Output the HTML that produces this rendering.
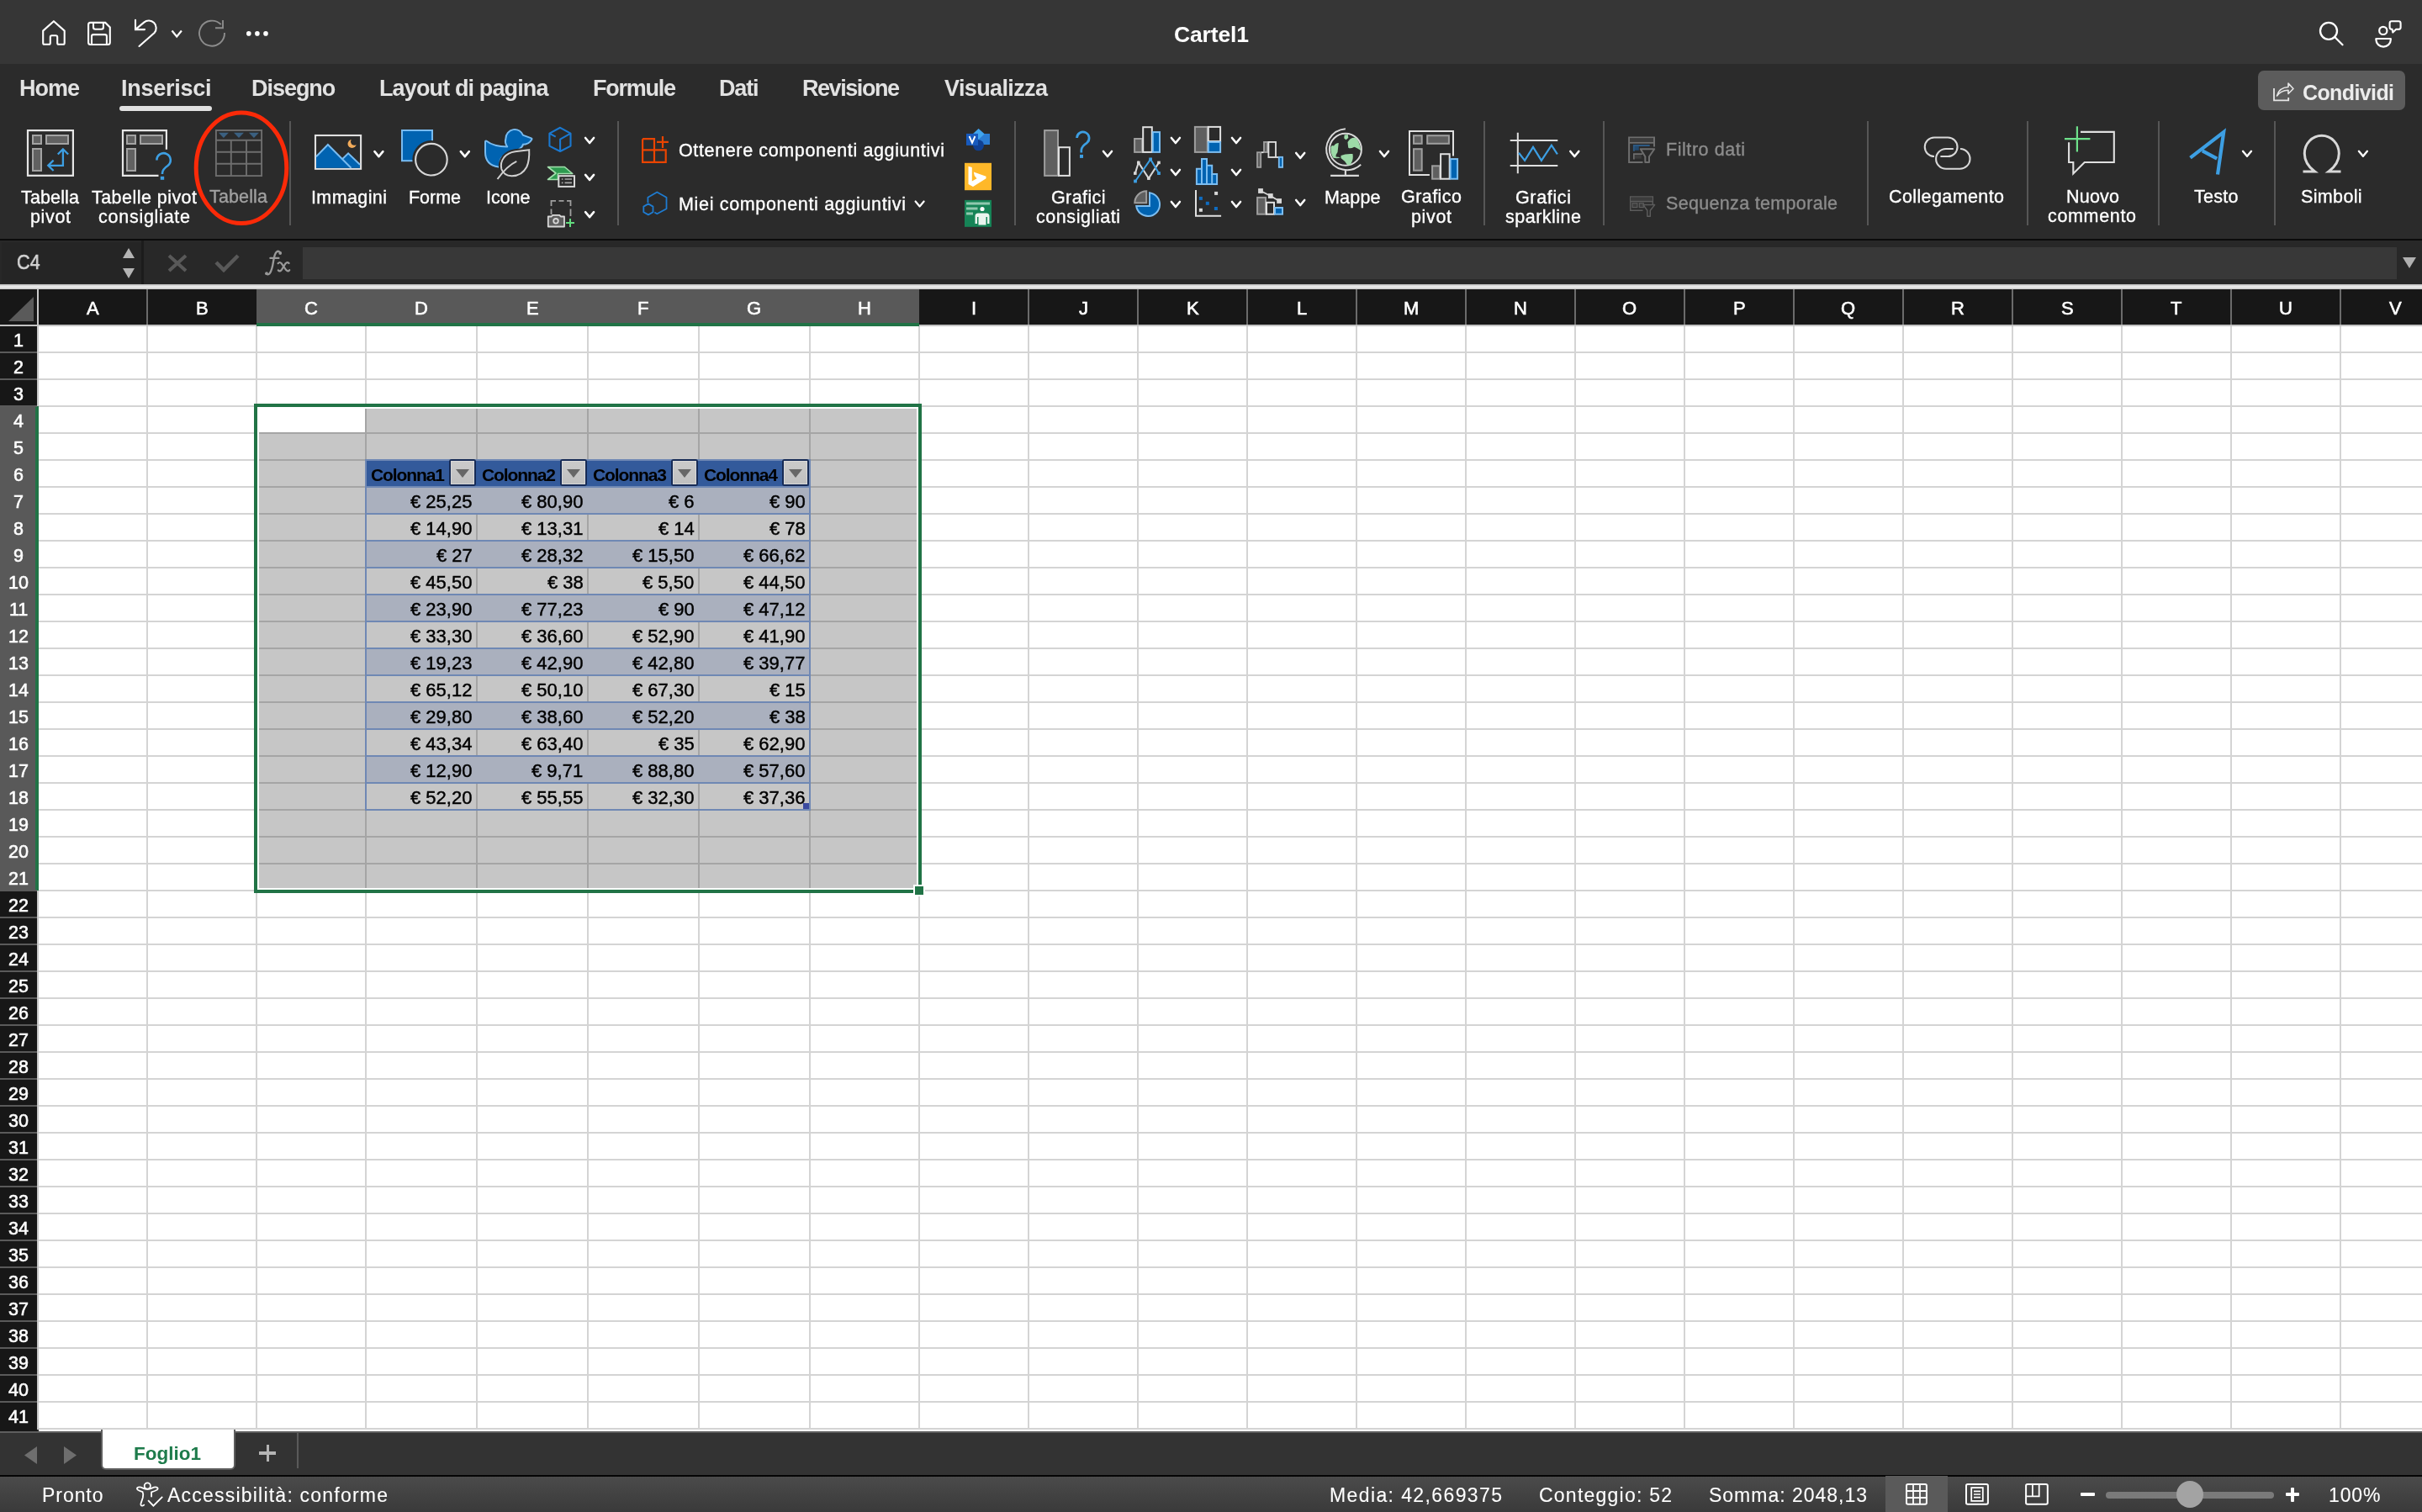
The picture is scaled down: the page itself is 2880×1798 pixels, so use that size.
<!DOCTYPE html>
<html><head><meta charset="utf-8"><style>
html,body{margin:0;padding:0;width:2880px;height:1798px;overflow:hidden;background:#2b2b2b;}
body>div,body>svg{position:absolute;}
.t{white-space:pre;line-height:1px;height:0;overflow:visible;will-change:transform}
</style></head><body>
<div style="left:0px;top:0px;width:2880px;height:76px;background:#363636;"></div>
<div style="left:0px;top:76px;width:2880px;height:208px;background:#2b2b2b;"></div>
<div style="left:0px;top:284px;width:2880px;height:2px;background:#0b0b0b;"></div>
<div style="left:0px;top:286px;width:2880px;height:52px;background:#282828;"></div>
<div style="left:2px;top:288px;width:166px;height:48px;background:#252525;"></div>
<div style="left:168px;top:286px;width:3px;height:52px;background:#1c1c1c;"></div>
<div style="left:360px;top:294px;width:2490px;height:38px;background:#383838;"></div>
<div style="left:0px;top:338px;width:2880px;height:6px;background:linear-gradient(#bababa,#f0f0f0 50%,#c6c6c6);"></div>
<div style="left:0px;top:344px;width:2880px;height:42px;background:#171717;"></div>
<div style="left:0px;top:386px;width:2880px;height:2px;background:#c2c2c2;"></div>
<div style="left:46px;top:388px;width:2834px;height:1310px;background:#ffffff;"></div>
<div style="left:0px;top:388px;width:44px;height:1312px;background:#171717;"></div>
<div style="left:44px;top:344px;width:2px;height:1356px;background:#c8c8c8;"></div>
<div style="left:305px;top:344px;width:788px;height:42px;background:#595959;"></div>
<div style="left:305px;top:384px;width:788px;height:4px;background:#217346;"></div>
<div style="left:174px;top:344px;width:2px;height:42px;background:#6b6b6b;"></div>
<div style="left:1222px;top:344px;width:2px;height:42px;background:#6b6b6b;"></div>
<div style="left:1352px;top:344px;width:2px;height:42px;background:#6b6b6b;"></div>
<div style="left:1482px;top:344px;width:2px;height:42px;background:#6b6b6b;"></div>
<div style="left:1612px;top:344px;width:2px;height:42px;background:#6b6b6b;"></div>
<div style="left:1742px;top:344px;width:2px;height:42px;background:#6b6b6b;"></div>
<div style="left:1872px;top:344px;width:2px;height:42px;background:#6b6b6b;"></div>
<div style="left:2002px;top:344px;width:2px;height:42px;background:#6b6b6b;"></div>
<div style="left:2132px;top:344px;width:2px;height:42px;background:#6b6b6b;"></div>
<div style="left:2262px;top:344px;width:2px;height:42px;background:#6b6b6b;"></div>
<div style="left:2392px;top:344px;width:2px;height:42px;background:#6b6b6b;"></div>
<div style="left:2522px;top:344px;width:2px;height:42px;background:#6b6b6b;"></div>
<div style="left:2652px;top:344px;width:2px;height:42px;background:#6b6b6b;"></div>
<div style="left:2782px;top:344px;width:2px;height:42px;background:#6b6b6b;"></div>
<div class="t" style="left:102.66px;top:366.37px;font-family:'Liberation Sans',sans-serif;font-size:22px;font-weight:400;color:#ffffff;letter-spacing:0.000px;-webkit-text-stroke:0.35px currentColor;-webkit-text-stroke:0.6px currentColor;">A</div>
<div class="t" style="left:232.66px;top:366.37px;font-family:'Liberation Sans',sans-serif;font-size:22px;font-weight:400;color:#ffffff;letter-spacing:0.000px;-webkit-text-stroke:0.35px currentColor;-webkit-text-stroke:0.6px currentColor;">B</div>
<div class="t" style="left:362.05px;top:366.37px;font-family:'Liberation Sans',sans-serif;font-size:22px;font-weight:400;color:#ffffff;letter-spacing:0.000px;-webkit-text-stroke:0.35px currentColor;-webkit-text-stroke:0.6px currentColor;">C</div>
<div class="t" style="left:493.05px;top:366.37px;font-family:'Liberation Sans',sans-serif;font-size:22px;font-weight:400;color:#ffffff;letter-spacing:0.000px;-webkit-text-stroke:0.35px currentColor;-webkit-text-stroke:0.6px currentColor;">D</div>
<div class="t" style="left:625.66px;top:366.37px;font-family:'Liberation Sans',sans-serif;font-size:22px;font-weight:400;color:#ffffff;letter-spacing:0.000px;-webkit-text-stroke:0.35px currentColor;-webkit-text-stroke:0.6px currentColor;">E</div>
<div class="t" style="left:758.27px;top:366.37px;font-family:'Liberation Sans',sans-serif;font-size:22px;font-weight:400;color:#ffffff;letter-spacing:0.000px;-webkit-text-stroke:0.35px currentColor;-webkit-text-stroke:0.6px currentColor;">F</div>
<div class="t" style="left:888.44px;top:366.37px;font-family:'Liberation Sans',sans-serif;font-size:22px;font-weight:400;color:#ffffff;letter-spacing:0.000px;-webkit-text-stroke:0.35px currentColor;-webkit-text-stroke:0.6px currentColor;">G</div>
<div class="t" style="left:1020.05px;top:366.37px;font-family:'Liberation Sans',sans-serif;font-size:22px;font-weight:400;color:#ffffff;letter-spacing:0.000px;-webkit-text-stroke:0.35px currentColor;-webkit-text-stroke:0.6px currentColor;">H</div>
<div class="t" style="left:1154.94px;top:366.37px;font-family:'Liberation Sans',sans-serif;font-size:22px;font-weight:400;color:#ffffff;letter-spacing:0.000px;-webkit-text-stroke:0.35px currentColor;-webkit-text-stroke:0.6px currentColor;">I</div>
<div class="t" style="left:1282.50px;top:366.37px;font-family:'Liberation Sans',sans-serif;font-size:22px;font-weight:400;color:#ffffff;letter-spacing:0.000px;-webkit-text-stroke:0.35px currentColor;-webkit-text-stroke:0.6px currentColor;">J</div>
<div class="t" style="left:1410.66px;top:366.37px;font-family:'Liberation Sans',sans-serif;font-size:22px;font-weight:400;color:#ffffff;letter-spacing:0.000px;-webkit-text-stroke:0.35px currentColor;-webkit-text-stroke:0.6px currentColor;">K</div>
<div class="t" style="left:1541.88px;top:366.37px;font-family:'Liberation Sans',sans-serif;font-size:22px;font-weight:400;color:#ffffff;letter-spacing:0.000px;-webkit-text-stroke:0.35px currentColor;-webkit-text-stroke:0.6px currentColor;">L</div>
<div class="t" style="left:1668.84px;top:366.37px;font-family:'Liberation Sans',sans-serif;font-size:22px;font-weight:400;color:#ffffff;letter-spacing:0.000px;-webkit-text-stroke:0.35px currentColor;-webkit-text-stroke:0.6px currentColor;">M</div>
<div class="t" style="left:1800.05px;top:366.37px;font-family:'Liberation Sans',sans-serif;font-size:22px;font-weight:400;color:#ffffff;letter-spacing:0.000px;-webkit-text-stroke:0.35px currentColor;-webkit-text-stroke:0.6px currentColor;">N</div>
<div class="t" style="left:1929.44px;top:366.37px;font-family:'Liberation Sans',sans-serif;font-size:22px;font-weight:400;color:#ffffff;letter-spacing:0.000px;-webkit-text-stroke:0.35px currentColor;-webkit-text-stroke:0.6px currentColor;">O</div>
<div class="t" style="left:2060.66px;top:366.37px;font-family:'Liberation Sans',sans-serif;font-size:22px;font-weight:400;color:#ffffff;letter-spacing:0.000px;-webkit-text-stroke:0.35px currentColor;-webkit-text-stroke:0.6px currentColor;">P</div>
<div class="t" style="left:2189.44px;top:366.37px;font-family:'Liberation Sans',sans-serif;font-size:22px;font-weight:400;color:#ffffff;letter-spacing:0.000px;-webkit-text-stroke:0.35px currentColor;-webkit-text-stroke:0.6px currentColor;">Q</div>
<div class="t" style="left:2320.05px;top:366.37px;font-family:'Liberation Sans',sans-serif;font-size:22px;font-weight:400;color:#ffffff;letter-spacing:0.000px;-webkit-text-stroke:0.35px currentColor;-webkit-text-stroke:0.6px currentColor;">R</div>
<div class="t" style="left:2450.66px;top:366.37px;font-family:'Liberation Sans',sans-serif;font-size:22px;font-weight:400;color:#ffffff;letter-spacing:0.000px;-webkit-text-stroke:0.35px currentColor;-webkit-text-stroke:0.6px currentColor;">S</div>
<div class="t" style="left:2581.27px;top:366.37px;font-family:'Liberation Sans',sans-serif;font-size:22px;font-weight:400;color:#ffffff;letter-spacing:0.000px;-webkit-text-stroke:0.35px currentColor;-webkit-text-stroke:0.6px currentColor;">T</div>
<div class="t" style="left:2710.05px;top:366.37px;font-family:'Liberation Sans',sans-serif;font-size:22px;font-weight:400;color:#ffffff;letter-spacing:0.000px;-webkit-text-stroke:0.35px currentColor;-webkit-text-stroke:0.6px currentColor;">U</div>
<div class="t" style="left:2840.66px;top:366.37px;font-family:'Liberation Sans',sans-serif;font-size:22px;font-weight:400;color:#ffffff;letter-spacing:0.000px;-webkit-text-stroke:0.35px currentColor;-webkit-text-stroke:0.6px currentColor;">V</div>
<svg style="left:0px;top:344px" width="44" height="42" viewBox="0 0 44 42"><path d="M10 38 L40 38 L40 9 Z" fill="#5a5a5a"/></svg>
<div style="left:174px;top:388px;width:2px;height:1311px;background:#d4d4d4;"></div>
<div style="left:304px;top:388px;width:2px;height:1311px;background:#d4d4d4;"></div>
<div style="left:434px;top:388px;width:2px;height:1311px;background:#d4d4d4;"></div>
<div style="left:566px;top:388px;width:2px;height:1311px;background:#d4d4d4;"></div>
<div style="left:698px;top:388px;width:2px;height:1311px;background:#d4d4d4;"></div>
<div style="left:830px;top:388px;width:2px;height:1311px;background:#d4d4d4;"></div>
<div style="left:962px;top:388px;width:2px;height:1311px;background:#d4d4d4;"></div>
<div style="left:1092px;top:388px;width:2px;height:1311px;background:#d4d4d4;"></div>
<div style="left:1222px;top:388px;width:2px;height:1311px;background:#d4d4d4;"></div>
<div style="left:1352px;top:388px;width:2px;height:1311px;background:#d4d4d4;"></div>
<div style="left:1482px;top:388px;width:2px;height:1311px;background:#d4d4d4;"></div>
<div style="left:1612px;top:388px;width:2px;height:1311px;background:#d4d4d4;"></div>
<div style="left:1742px;top:388px;width:2px;height:1311px;background:#d4d4d4;"></div>
<div style="left:1872px;top:388px;width:2px;height:1311px;background:#d4d4d4;"></div>
<div style="left:2002px;top:388px;width:2px;height:1311px;background:#d4d4d4;"></div>
<div style="left:2132px;top:388px;width:2px;height:1311px;background:#d4d4d4;"></div>
<div style="left:2262px;top:388px;width:2px;height:1311px;background:#d4d4d4;"></div>
<div style="left:2392px;top:388px;width:2px;height:1311px;background:#d4d4d4;"></div>
<div style="left:2522px;top:388px;width:2px;height:1311px;background:#d4d4d4;"></div>
<div style="left:2652px;top:388px;width:2px;height:1311px;background:#d4d4d4;"></div>
<div style="left:2782px;top:388px;width:2px;height:1311px;background:#d4d4d4;"></div>
<div style="left:46px;top:418px;width:2834px;height:2px;background:#d4d4d4;"></div>
<div style="left:46px;top:450px;width:2834px;height:2px;background:#d4d4d4;"></div>
<div style="left:46px;top:482px;width:2834px;height:2px;background:#d4d4d4;"></div>
<div style="left:46px;top:514px;width:2834px;height:2px;background:#d4d4d4;"></div>
<div style="left:46px;top:546px;width:2834px;height:2px;background:#d4d4d4;"></div>
<div style="left:46px;top:578px;width:2834px;height:2px;background:#d4d4d4;"></div>
<div style="left:46px;top:610px;width:2834px;height:2px;background:#d4d4d4;"></div>
<div style="left:46px;top:642px;width:2834px;height:2px;background:#d4d4d4;"></div>
<div style="left:46px;top:674px;width:2834px;height:2px;background:#d4d4d4;"></div>
<div style="left:46px;top:706px;width:2834px;height:2px;background:#d4d4d4;"></div>
<div style="left:46px;top:738px;width:2834px;height:2px;background:#d4d4d4;"></div>
<div style="left:46px;top:770px;width:2834px;height:2px;background:#d4d4d4;"></div>
<div style="left:46px;top:802px;width:2834px;height:2px;background:#d4d4d4;"></div>
<div style="left:46px;top:834px;width:2834px;height:2px;background:#d4d4d4;"></div>
<div style="left:46px;top:866px;width:2834px;height:2px;background:#d4d4d4;"></div>
<div style="left:46px;top:898px;width:2834px;height:2px;background:#d4d4d4;"></div>
<div style="left:46px;top:930px;width:2834px;height:2px;background:#d4d4d4;"></div>
<div style="left:46px;top:962px;width:2834px;height:2px;background:#d4d4d4;"></div>
<div style="left:46px;top:994px;width:2834px;height:2px;background:#d4d4d4;"></div>
<div style="left:46px;top:1026px;width:2834px;height:2px;background:#d4d4d4;"></div>
<div style="left:46px;top:1058px;width:2834px;height:2px;background:#d4d4d4;"></div>
<div style="left:46px;top:1090px;width:2834px;height:2px;background:#d4d4d4;"></div>
<div style="left:46px;top:1122px;width:2834px;height:2px;background:#d4d4d4;"></div>
<div style="left:46px;top:1154px;width:2834px;height:2px;background:#d4d4d4;"></div>
<div style="left:46px;top:1186px;width:2834px;height:2px;background:#d4d4d4;"></div>
<div style="left:46px;top:1218px;width:2834px;height:2px;background:#d4d4d4;"></div>
<div style="left:46px;top:1250px;width:2834px;height:2px;background:#d4d4d4;"></div>
<div style="left:46px;top:1282px;width:2834px;height:2px;background:#d4d4d4;"></div>
<div style="left:46px;top:1314px;width:2834px;height:2px;background:#d4d4d4;"></div>
<div style="left:46px;top:1346px;width:2834px;height:2px;background:#d4d4d4;"></div>
<div style="left:46px;top:1378px;width:2834px;height:2px;background:#d4d4d4;"></div>
<div style="left:46px;top:1410px;width:2834px;height:2px;background:#d4d4d4;"></div>
<div style="left:46px;top:1442px;width:2834px;height:2px;background:#d4d4d4;"></div>
<div style="left:46px;top:1474px;width:2834px;height:2px;background:#d4d4d4;"></div>
<div style="left:46px;top:1506px;width:2834px;height:2px;background:#d4d4d4;"></div>
<div style="left:46px;top:1538px;width:2834px;height:2px;background:#d4d4d4;"></div>
<div style="left:46px;top:1570px;width:2834px;height:2px;background:#d4d4d4;"></div>
<div style="left:46px;top:1602px;width:2834px;height:2px;background:#d4d4d4;"></div>
<div style="left:46px;top:1634px;width:2834px;height:2px;background:#d4d4d4;"></div>
<div style="left:46px;top:1666px;width:2834px;height:2px;background:#d4d4d4;"></div>
<div style="left:46px;top:1698px;width:2834px;height:2px;background:#d4d4d4;"></div>
<div style="left:0px;top:483px;width:42px;height:576px;background:#595959;"></div>
<div style="left:42px;top:483px;width:4px;height:576px;background:#217346;"></div>
<div style="left:0px;top:418px;width:44px;height:2px;background:#5a5a5a;"></div>
<div style="left:0px;top:450px;width:44px;height:2px;background:#5a5a5a;"></div>
<div style="left:0px;top:482px;width:44px;height:2px;background:#5a5a5a;"></div>
<div style="left:0px;top:1058px;width:44px;height:2px;background:#5a5a5a;"></div>
<div style="left:0px;top:1090px;width:44px;height:2px;background:#5a5a5a;"></div>
<div style="left:0px;top:1122px;width:44px;height:2px;background:#5a5a5a;"></div>
<div style="left:0px;top:1154px;width:44px;height:2px;background:#5a5a5a;"></div>
<div style="left:0px;top:1186px;width:44px;height:2px;background:#5a5a5a;"></div>
<div style="left:0px;top:1218px;width:44px;height:2px;background:#5a5a5a;"></div>
<div style="left:0px;top:1250px;width:44px;height:2px;background:#5a5a5a;"></div>
<div style="left:0px;top:1282px;width:44px;height:2px;background:#5a5a5a;"></div>
<div style="left:0px;top:1314px;width:44px;height:2px;background:#5a5a5a;"></div>
<div style="left:0px;top:1346px;width:44px;height:2px;background:#5a5a5a;"></div>
<div style="left:0px;top:1378px;width:44px;height:2px;background:#5a5a5a;"></div>
<div style="left:0px;top:1410px;width:44px;height:2px;background:#5a5a5a;"></div>
<div style="left:0px;top:1442px;width:44px;height:2px;background:#5a5a5a;"></div>
<div style="left:0px;top:1474px;width:44px;height:2px;background:#5a5a5a;"></div>
<div style="left:0px;top:1506px;width:44px;height:2px;background:#5a5a5a;"></div>
<div style="left:0px;top:1538px;width:44px;height:2px;background:#5a5a5a;"></div>
<div style="left:0px;top:1570px;width:44px;height:2px;background:#5a5a5a;"></div>
<div style="left:0px;top:1602px;width:44px;height:2px;background:#5a5a5a;"></div>
<div style="left:0px;top:1634px;width:44px;height:2px;background:#5a5a5a;"></div>
<div style="left:0px;top:1666px;width:44px;height:2px;background:#5a5a5a;"></div>
<div style="left:0px;top:1698px;width:44px;height:2px;background:#5a5a5a;"></div>
<div class="t" style="left:16.02px;top:404.55px;font-family:'Liberation Sans',sans-serif;font-size:21.5px;font-weight:400;color:#ffffff;letter-spacing:0.000px;-webkit-text-stroke:0.35px currentColor;-webkit-text-stroke:0.6px currentColor;">1</div>
<div class="t" style="left:16.02px;top:436.55px;font-family:'Liberation Sans',sans-serif;font-size:21.5px;font-weight:400;color:#ffffff;letter-spacing:0.000px;-webkit-text-stroke:0.35px currentColor;-webkit-text-stroke:0.6px currentColor;">2</div>
<div class="t" style="left:16.02px;top:468.55px;font-family:'Liberation Sans',sans-serif;font-size:21.5px;font-weight:400;color:#ffffff;letter-spacing:0.000px;-webkit-text-stroke:0.35px currentColor;-webkit-text-stroke:0.6px currentColor;">3</div>
<div class="t" style="left:16.02px;top:500.55px;font-family:'Liberation Sans',sans-serif;font-size:21.5px;font-weight:400;color:#ffffff;letter-spacing:0.000px;-webkit-text-stroke:0.35px currentColor;-webkit-text-stroke:0.6px currentColor;">4</div>
<div class="t" style="left:16.02px;top:532.55px;font-family:'Liberation Sans',sans-serif;font-size:21.5px;font-weight:400;color:#ffffff;letter-spacing:0.000px;-webkit-text-stroke:0.35px currentColor;-webkit-text-stroke:0.6px currentColor;">5</div>
<div class="t" style="left:16.02px;top:564.55px;font-family:'Liberation Sans',sans-serif;font-size:21.5px;font-weight:400;color:#ffffff;letter-spacing:0.000px;-webkit-text-stroke:0.35px currentColor;-webkit-text-stroke:0.6px currentColor;">6</div>
<div class="t" style="left:16.02px;top:596.55px;font-family:'Liberation Sans',sans-serif;font-size:21.5px;font-weight:400;color:#ffffff;letter-spacing:0.000px;-webkit-text-stroke:0.35px currentColor;-webkit-text-stroke:0.6px currentColor;">7</div>
<div class="t" style="left:16.02px;top:628.55px;font-family:'Liberation Sans',sans-serif;font-size:21.5px;font-weight:400;color:#ffffff;letter-spacing:0.000px;-webkit-text-stroke:0.35px currentColor;-webkit-text-stroke:0.6px currentColor;">8</div>
<div class="t" style="left:16.02px;top:660.55px;font-family:'Liberation Sans',sans-serif;font-size:21.5px;font-weight:400;color:#ffffff;letter-spacing:0.000px;-webkit-text-stroke:0.35px currentColor;-webkit-text-stroke:0.6px currentColor;">9</div>
<div class="t" style="left:10.04px;top:692.55px;font-family:'Liberation Sans',sans-serif;font-size:21.5px;font-weight:400;color:#ffffff;letter-spacing:0.000px;-webkit-text-stroke:0.35px currentColor;-webkit-text-stroke:0.6px currentColor;">10</div>
<div class="t" style="left:10.84px;top:724.55px;font-family:'Liberation Sans',sans-serif;font-size:21.5px;font-weight:400;color:#ffffff;letter-spacing:0.000px;-webkit-text-stroke:0.35px currentColor;-webkit-text-stroke:0.6px currentColor;">11</div>
<div class="t" style="left:10.04px;top:756.55px;font-family:'Liberation Sans',sans-serif;font-size:21.5px;font-weight:400;color:#ffffff;letter-spacing:0.000px;-webkit-text-stroke:0.35px currentColor;-webkit-text-stroke:0.6px currentColor;">12</div>
<div class="t" style="left:10.04px;top:788.55px;font-family:'Liberation Sans',sans-serif;font-size:21.5px;font-weight:400;color:#ffffff;letter-spacing:0.000px;-webkit-text-stroke:0.35px currentColor;-webkit-text-stroke:0.6px currentColor;">13</div>
<div class="t" style="left:10.04px;top:820.55px;font-family:'Liberation Sans',sans-serif;font-size:21.5px;font-weight:400;color:#ffffff;letter-spacing:0.000px;-webkit-text-stroke:0.35px currentColor;-webkit-text-stroke:0.6px currentColor;">14</div>
<div class="t" style="left:10.04px;top:852.55px;font-family:'Liberation Sans',sans-serif;font-size:21.5px;font-weight:400;color:#ffffff;letter-spacing:0.000px;-webkit-text-stroke:0.35px currentColor;-webkit-text-stroke:0.6px currentColor;">15</div>
<div class="t" style="left:10.04px;top:884.55px;font-family:'Liberation Sans',sans-serif;font-size:21.5px;font-weight:400;color:#ffffff;letter-spacing:0.000px;-webkit-text-stroke:0.35px currentColor;-webkit-text-stroke:0.6px currentColor;">16</div>
<div class="t" style="left:10.04px;top:916.55px;font-family:'Liberation Sans',sans-serif;font-size:21.5px;font-weight:400;color:#ffffff;letter-spacing:0.000px;-webkit-text-stroke:0.35px currentColor;-webkit-text-stroke:0.6px currentColor;">17</div>
<div class="t" style="left:10.04px;top:948.55px;font-family:'Liberation Sans',sans-serif;font-size:21.5px;font-weight:400;color:#ffffff;letter-spacing:0.000px;-webkit-text-stroke:0.35px currentColor;-webkit-text-stroke:0.6px currentColor;">18</div>
<div class="t" style="left:10.04px;top:980.55px;font-family:'Liberation Sans',sans-serif;font-size:21.5px;font-weight:400;color:#ffffff;letter-spacing:0.000px;-webkit-text-stroke:0.35px currentColor;-webkit-text-stroke:0.6px currentColor;">19</div>
<div class="t" style="left:10.04px;top:1012.55px;font-family:'Liberation Sans',sans-serif;font-size:21.5px;font-weight:400;color:#ffffff;letter-spacing:0.000px;-webkit-text-stroke:0.35px currentColor;-webkit-text-stroke:0.6px currentColor;">20</div>
<div class="t" style="left:10.04px;top:1044.55px;font-family:'Liberation Sans',sans-serif;font-size:21.5px;font-weight:400;color:#ffffff;letter-spacing:0.000px;-webkit-text-stroke:0.35px currentColor;-webkit-text-stroke:0.6px currentColor;">21</div>
<div class="t" style="left:10.04px;top:1076.55px;font-family:'Liberation Sans',sans-serif;font-size:21.5px;font-weight:400;color:#ffffff;letter-spacing:0.000px;-webkit-text-stroke:0.35px currentColor;-webkit-text-stroke:0.6px currentColor;">22</div>
<div class="t" style="left:10.04px;top:1108.55px;font-family:'Liberation Sans',sans-serif;font-size:21.5px;font-weight:400;color:#ffffff;letter-spacing:0.000px;-webkit-text-stroke:0.35px currentColor;-webkit-text-stroke:0.6px currentColor;">23</div>
<div class="t" style="left:10.04px;top:1140.55px;font-family:'Liberation Sans',sans-serif;font-size:21.5px;font-weight:400;color:#ffffff;letter-spacing:0.000px;-webkit-text-stroke:0.35px currentColor;-webkit-text-stroke:0.6px currentColor;">24</div>
<div class="t" style="left:10.04px;top:1172.55px;font-family:'Liberation Sans',sans-serif;font-size:21.5px;font-weight:400;color:#ffffff;letter-spacing:0.000px;-webkit-text-stroke:0.35px currentColor;-webkit-text-stroke:0.6px currentColor;">25</div>
<div class="t" style="left:10.04px;top:1204.55px;font-family:'Liberation Sans',sans-serif;font-size:21.5px;font-weight:400;color:#ffffff;letter-spacing:0.000px;-webkit-text-stroke:0.35px currentColor;-webkit-text-stroke:0.6px currentColor;">26</div>
<div class="t" style="left:10.04px;top:1236.55px;font-family:'Liberation Sans',sans-serif;font-size:21.5px;font-weight:400;color:#ffffff;letter-spacing:0.000px;-webkit-text-stroke:0.35px currentColor;-webkit-text-stroke:0.6px currentColor;">27</div>
<div class="t" style="left:10.04px;top:1268.55px;font-family:'Liberation Sans',sans-serif;font-size:21.5px;font-weight:400;color:#ffffff;letter-spacing:0.000px;-webkit-text-stroke:0.35px currentColor;-webkit-text-stroke:0.6px currentColor;">28</div>
<div class="t" style="left:10.04px;top:1300.55px;font-family:'Liberation Sans',sans-serif;font-size:21.5px;font-weight:400;color:#ffffff;letter-spacing:0.000px;-webkit-text-stroke:0.35px currentColor;-webkit-text-stroke:0.6px currentColor;">29</div>
<div class="t" style="left:10.04px;top:1332.55px;font-family:'Liberation Sans',sans-serif;font-size:21.5px;font-weight:400;color:#ffffff;letter-spacing:0.000px;-webkit-text-stroke:0.35px currentColor;-webkit-text-stroke:0.6px currentColor;">30</div>
<div class="t" style="left:10.04px;top:1364.55px;font-family:'Liberation Sans',sans-serif;font-size:21.5px;font-weight:400;color:#ffffff;letter-spacing:0.000px;-webkit-text-stroke:0.35px currentColor;-webkit-text-stroke:0.6px currentColor;">31</div>
<div class="t" style="left:10.04px;top:1396.55px;font-family:'Liberation Sans',sans-serif;font-size:21.5px;font-weight:400;color:#ffffff;letter-spacing:0.000px;-webkit-text-stroke:0.35px currentColor;-webkit-text-stroke:0.6px currentColor;">32</div>
<div class="t" style="left:10.04px;top:1428.55px;font-family:'Liberation Sans',sans-serif;font-size:21.5px;font-weight:400;color:#ffffff;letter-spacing:0.000px;-webkit-text-stroke:0.35px currentColor;-webkit-text-stroke:0.6px currentColor;">33</div>
<div class="t" style="left:10.04px;top:1460.55px;font-family:'Liberation Sans',sans-serif;font-size:21.5px;font-weight:400;color:#ffffff;letter-spacing:0.000px;-webkit-text-stroke:0.35px currentColor;-webkit-text-stroke:0.6px currentColor;">34</div>
<div class="t" style="left:10.04px;top:1492.55px;font-family:'Liberation Sans',sans-serif;font-size:21.5px;font-weight:400;color:#ffffff;letter-spacing:0.000px;-webkit-text-stroke:0.35px currentColor;-webkit-text-stroke:0.6px currentColor;">35</div>
<div class="t" style="left:10.04px;top:1524.55px;font-family:'Liberation Sans',sans-serif;font-size:21.5px;font-weight:400;color:#ffffff;letter-spacing:0.000px;-webkit-text-stroke:0.35px currentColor;-webkit-text-stroke:0.6px currentColor;">36</div>
<div class="t" style="left:10.04px;top:1556.55px;font-family:'Liberation Sans',sans-serif;font-size:21.5px;font-weight:400;color:#ffffff;letter-spacing:0.000px;-webkit-text-stroke:0.35px currentColor;-webkit-text-stroke:0.6px currentColor;">37</div>
<div class="t" style="left:10.04px;top:1588.55px;font-family:'Liberation Sans',sans-serif;font-size:21.5px;font-weight:400;color:#ffffff;letter-spacing:0.000px;-webkit-text-stroke:0.35px currentColor;-webkit-text-stroke:0.6px currentColor;">38</div>
<div class="t" style="left:10.04px;top:1620.55px;font-family:'Liberation Sans',sans-serif;font-size:21.5px;font-weight:400;color:#ffffff;letter-spacing:0.000px;-webkit-text-stroke:0.35px currentColor;-webkit-text-stroke:0.6px currentColor;">39</div>
<div class="t" style="left:10.04px;top:1652.55px;font-family:'Liberation Sans',sans-serif;font-size:21.5px;font-weight:400;color:#ffffff;letter-spacing:0.000px;-webkit-text-stroke:0.35px currentColor;-webkit-text-stroke:0.6px currentColor;">40</div>
<div class="t" style="left:10.04px;top:1684.55px;font-family:'Liberation Sans',sans-serif;font-size:21.5px;font-weight:400;color:#ffffff;letter-spacing:0.000px;-webkit-text-stroke:0.35px currentColor;-webkit-text-stroke:0.6px currentColor;">41</div>
<div style="left:306px;top:484px;width:786px;height:574px;background:#ffffff;"></div>
<div style="left:308px;top:486px;width:782px;height:570px;background:#c6c6c6;"></div>
<div style="left:306px;top:484px;width:128px;height:30px;background:#ffffff;"></div>
<div style="left:434px;top:486px;width:2px;height:570px;background:#a5a5a5;"></div>
<div style="left:566px;top:486px;width:2px;height:570px;background:#a5a5a5;"></div>
<div style="left:698px;top:486px;width:2px;height:570px;background:#a5a5a5;"></div>
<div style="left:830px;top:486px;width:2px;height:570px;background:#a5a5a5;"></div>
<div style="left:962px;top:486px;width:2px;height:570px;background:#a5a5a5;"></div>
<div style="left:308px;top:514px;width:782px;height:2px;background:#a5a5a5;"></div>
<div style="left:308px;top:546px;width:782px;height:2px;background:#a5a5a5;"></div>
<div style="left:308px;top:578px;width:782px;height:2px;background:#a5a5a5;"></div>
<div style="left:308px;top:610px;width:782px;height:2px;background:#a5a5a5;"></div>
<div style="left:308px;top:642px;width:782px;height:2px;background:#a5a5a5;"></div>
<div style="left:308px;top:674px;width:782px;height:2px;background:#a5a5a5;"></div>
<div style="left:308px;top:706px;width:782px;height:2px;background:#a5a5a5;"></div>
<div style="left:308px;top:738px;width:782px;height:2px;background:#a5a5a5;"></div>
<div style="left:308px;top:770px;width:782px;height:2px;background:#a5a5a5;"></div>
<div style="left:308px;top:802px;width:782px;height:2px;background:#a5a5a5;"></div>
<div style="left:308px;top:834px;width:782px;height:2px;background:#a5a5a5;"></div>
<div style="left:308px;top:866px;width:782px;height:2px;background:#a5a5a5;"></div>
<div style="left:308px;top:898px;width:782px;height:2px;background:#a5a5a5;"></div>
<div style="left:308px;top:930px;width:782px;height:2px;background:#a5a5a5;"></div>
<div style="left:308px;top:962px;width:782px;height:2px;background:#a5a5a5;"></div>
<div style="left:308px;top:994px;width:782px;height:2px;background:#a5a5a5;"></div>
<div style="left:308px;top:1026px;width:782px;height:2px;background:#a5a5a5;"></div>
<div style="left:306px;top:484px;width:128px;height:30px;background:#ffffff;"></div>
<div style="left:434px;top:546px;width:530px;height:418px;background:#c6c6c6;"></div>
<div style="left:434px;top:546px;width:530px;height:34px;background:#6f88b4;"></div>
<div style="left:436px;top:548px;width:526px;height:30px;background:#335a9b;"></div>
<div style="left:436px;top:580px;width:526px;height:30px;background:#aab0be;"></div>
<div style="left:434px;top:610px;width:530px;height:2px;background:#6f88b4;"></div>
<div style="left:434px;top:642px;width:530px;height:2px;background:#6f88b4;"></div>
<div style="left:436px;top:644px;width:526px;height:30px;background:#aab0be;"></div>
<div style="left:434px;top:674px;width:530px;height:2px;background:#6f88b4;"></div>
<div style="left:434px;top:706px;width:530px;height:2px;background:#6f88b4;"></div>
<div style="left:436px;top:708px;width:526px;height:30px;background:#aab0be;"></div>
<div style="left:434px;top:738px;width:530px;height:2px;background:#6f88b4;"></div>
<div style="left:434px;top:770px;width:530px;height:2px;background:#6f88b4;"></div>
<div style="left:436px;top:772px;width:526px;height:30px;background:#aab0be;"></div>
<div style="left:434px;top:802px;width:530px;height:2px;background:#6f88b4;"></div>
<div style="left:434px;top:834px;width:530px;height:2px;background:#6f88b4;"></div>
<div style="left:436px;top:836px;width:526px;height:30px;background:#aab0be;"></div>
<div style="left:434px;top:866px;width:530px;height:2px;background:#6f88b4;"></div>
<div style="left:434px;top:898px;width:530px;height:2px;background:#6f88b4;"></div>
<div style="left:436px;top:900px;width:526px;height:30px;background:#aab0be;"></div>
<div style="left:434px;top:930px;width:530px;height:2px;background:#6f88b4;"></div>
<div style="left:434px;top:962px;width:530px;height:2px;background:#6f88b4;"></div>
<div style="left:434px;top:546px;width:2px;height:418px;background:#6f88b4;"></div>
<div style="left:962px;top:546px;width:2px;height:418px;background:#6f88b4;"></div>
<div style="left:566px;top:612px;width:2px;height:30px;background:#a5a5a5;"></div>
<div style="left:698px;top:612px;width:2px;height:30px;background:#a5a5a5;"></div>
<div style="left:830px;top:612px;width:2px;height:30px;background:#a5a5a5;"></div>
<div style="left:566px;top:676px;width:2px;height:30px;background:#a5a5a5;"></div>
<div style="left:698px;top:676px;width:2px;height:30px;background:#a5a5a5;"></div>
<div style="left:830px;top:676px;width:2px;height:30px;background:#a5a5a5;"></div>
<div style="left:566px;top:740px;width:2px;height:30px;background:#a5a5a5;"></div>
<div style="left:698px;top:740px;width:2px;height:30px;background:#a5a5a5;"></div>
<div style="left:830px;top:740px;width:2px;height:30px;background:#a5a5a5;"></div>
<div style="left:566px;top:804px;width:2px;height:30px;background:#a5a5a5;"></div>
<div style="left:698px;top:804px;width:2px;height:30px;background:#a5a5a5;"></div>
<div style="left:830px;top:804px;width:2px;height:30px;background:#a5a5a5;"></div>
<div style="left:566px;top:868px;width:2px;height:30px;background:#a5a5a5;"></div>
<div style="left:698px;top:868px;width:2px;height:30px;background:#a5a5a5;"></div>
<div style="left:830px;top:868px;width:2px;height:30px;background:#a5a5a5;"></div>
<div style="left:566px;top:932px;width:2px;height:30px;background:#a5a5a5;"></div>
<div style="left:698px;top:932px;width:2px;height:30px;background:#a5a5a5;"></div>
<div style="left:830px;top:932px;width:2px;height:30px;background:#a5a5a5;"></div>
<div style="left:534px;top:546px;width:32px;height:32px;background:#172b55;border-radius:3px"></div>
<div style="left:536px;top:548px;width:28px;height:28px;background:linear-gradient(#cbcbcb,#bfbfbf);box-shadow:inset 0 0 0 1px #d8d8d8"></div>
<svg style="left:542px;top:558px" width="16" height="10" viewBox="0 0 16 10"><path d="M0 0H16L8 10Z" fill="#676767"/></svg>
<div class="t" style="left:441.00px;top:564.22px;font-family:'Liberation Sans',sans-serif;font-size:21px;font-weight:700;color:#000000;letter-spacing:-1.096px;">Colonna1</div>
<div style="left:666px;top:546px;width:32px;height:32px;background:#172b55;border-radius:3px"></div>
<div style="left:668px;top:548px;width:28px;height:28px;background:linear-gradient(#cbcbcb,#bfbfbf);box-shadow:inset 0 0 0 1px #d8d8d8"></div>
<svg style="left:674px;top:558px" width="16" height="10" viewBox="0 0 16 10"><path d="M0 0H16L8 10Z" fill="#676767"/></svg>
<div class="t" style="left:573.00px;top:564.22px;font-family:'Liberation Sans',sans-serif;font-size:21px;font-weight:700;color:#000000;letter-spacing:-1.096px;">Colonna2</div>
<div style="left:798px;top:546px;width:32px;height:32px;background:#172b55;border-radius:3px"></div>
<div style="left:800px;top:548px;width:28px;height:28px;background:linear-gradient(#cbcbcb,#bfbfbf);box-shadow:inset 0 0 0 1px #d8d8d8"></div>
<svg style="left:806px;top:558px" width="16" height="10" viewBox="0 0 16 10"><path d="M0 0H16L8 10Z" fill="#676767"/></svg>
<div class="t" style="left:705.00px;top:564.22px;font-family:'Liberation Sans',sans-serif;font-size:21px;font-weight:700;color:#000000;letter-spacing:-1.096px;">Colonna3</div>
<div style="left:930px;top:546px;width:32px;height:32px;background:#172b55;border-radius:3px"></div>
<div style="left:932px;top:548px;width:28px;height:28px;background:linear-gradient(#cbcbcb,#bfbfbf);box-shadow:inset 0 0 0 1px #d8d8d8"></div>
<svg style="left:938px;top:558px" width="16" height="10" viewBox="0 0 16 10"><path d="M0 0H16L8 10Z" fill="#676767"/></svg>
<div class="t" style="left:837.00px;top:564.22px;font-family:'Liberation Sans',sans-serif;font-size:21px;font-weight:700;color:#000000;letter-spacing:-1.096px;">Colonna4</div>
<div class="t" style="left:488.09px;top:596.37px;font-family:'Liberation Sans',sans-serif;font-size:22px;font-weight:400;color:#000000;letter-spacing:0.000px;-webkit-text-stroke:0.35px currentColor;-webkit-text-stroke:0.45px currentColor;">€ 25,25</div>
<div class="t" style="left:620.09px;top:596.37px;font-family:'Liberation Sans',sans-serif;font-size:22px;font-weight:400;color:#000000;letter-spacing:0.000px;-webkit-text-stroke:0.35px currentColor;-webkit-text-stroke:0.45px currentColor;">€ 80,90</div>
<div class="t" style="left:794.91px;top:596.37px;font-family:'Liberation Sans',sans-serif;font-size:22px;font-weight:400;color:#000000;letter-spacing:0.000px;-webkit-text-stroke:0.35px currentColor;-webkit-text-stroke:0.45px currentColor;">€ 6</div>
<div class="t" style="left:914.67px;top:596.37px;font-family:'Liberation Sans',sans-serif;font-size:22px;font-weight:400;color:#000000;letter-spacing:0.000px;-webkit-text-stroke:0.35px currentColor;-webkit-text-stroke:0.45px currentColor;">€ 90</div>
<div class="t" style="left:488.09px;top:628.37px;font-family:'Liberation Sans',sans-serif;font-size:22px;font-weight:400;color:#000000;letter-spacing:0.000px;-webkit-text-stroke:0.35px currentColor;-webkit-text-stroke:0.45px currentColor;">€ 14,90</div>
<div class="t" style="left:620.09px;top:628.37px;font-family:'Liberation Sans',sans-serif;font-size:22px;font-weight:400;color:#000000;letter-spacing:0.000px;-webkit-text-stroke:0.35px currentColor;-webkit-text-stroke:0.45px currentColor;">€ 13,31</div>
<div class="t" style="left:782.67px;top:628.37px;font-family:'Liberation Sans',sans-serif;font-size:22px;font-weight:400;color:#000000;letter-spacing:0.000px;-webkit-text-stroke:0.35px currentColor;-webkit-text-stroke:0.45px currentColor;">€ 14</div>
<div class="t" style="left:914.67px;top:628.37px;font-family:'Liberation Sans',sans-serif;font-size:22px;font-weight:400;color:#000000;letter-spacing:0.000px;-webkit-text-stroke:0.35px currentColor;-webkit-text-stroke:0.45px currentColor;">€ 78</div>
<div class="t" style="left:518.67px;top:660.37px;font-family:'Liberation Sans',sans-serif;font-size:22px;font-weight:400;color:#000000;letter-spacing:0.000px;-webkit-text-stroke:0.35px currentColor;-webkit-text-stroke:0.45px currentColor;">€ 27</div>
<div class="t" style="left:620.09px;top:660.37px;font-family:'Liberation Sans',sans-serif;font-size:22px;font-weight:400;color:#000000;letter-spacing:0.000px;-webkit-text-stroke:0.35px currentColor;-webkit-text-stroke:0.45px currentColor;">€ 28,32</div>
<div class="t" style="left:752.09px;top:660.37px;font-family:'Liberation Sans',sans-serif;font-size:22px;font-weight:400;color:#000000;letter-spacing:0.000px;-webkit-text-stroke:0.35px currentColor;-webkit-text-stroke:0.45px currentColor;">€ 15,50</div>
<div class="t" style="left:884.09px;top:660.37px;font-family:'Liberation Sans',sans-serif;font-size:22px;font-weight:400;color:#000000;letter-spacing:0.000px;-webkit-text-stroke:0.35px currentColor;-webkit-text-stroke:0.45px currentColor;">€ 66,62</div>
<div class="t" style="left:488.09px;top:692.37px;font-family:'Liberation Sans',sans-serif;font-size:22px;font-weight:400;color:#000000;letter-spacing:0.000px;-webkit-text-stroke:0.35px currentColor;-webkit-text-stroke:0.45px currentColor;">€ 45,50</div>
<div class="t" style="left:650.67px;top:692.37px;font-family:'Liberation Sans',sans-serif;font-size:22px;font-weight:400;color:#000000;letter-spacing:0.000px;-webkit-text-stroke:0.35px currentColor;-webkit-text-stroke:0.45px currentColor;">€ 38</div>
<div class="t" style="left:764.33px;top:692.37px;font-family:'Liberation Sans',sans-serif;font-size:22px;font-weight:400;color:#000000;letter-spacing:0.000px;-webkit-text-stroke:0.35px currentColor;-webkit-text-stroke:0.45px currentColor;">€ 5,50</div>
<div class="t" style="left:884.09px;top:692.37px;font-family:'Liberation Sans',sans-serif;font-size:22px;font-weight:400;color:#000000;letter-spacing:0.000px;-webkit-text-stroke:0.35px currentColor;-webkit-text-stroke:0.45px currentColor;">€ 44,50</div>
<div class="t" style="left:488.09px;top:724.37px;font-family:'Liberation Sans',sans-serif;font-size:22px;font-weight:400;color:#000000;letter-spacing:0.000px;-webkit-text-stroke:0.35px currentColor;-webkit-text-stroke:0.45px currentColor;">€ 23,90</div>
<div class="t" style="left:620.09px;top:724.37px;font-family:'Liberation Sans',sans-serif;font-size:22px;font-weight:400;color:#000000;letter-spacing:0.000px;-webkit-text-stroke:0.35px currentColor;-webkit-text-stroke:0.45px currentColor;">€ 77,23</div>
<div class="t" style="left:782.67px;top:724.37px;font-family:'Liberation Sans',sans-serif;font-size:22px;font-weight:400;color:#000000;letter-spacing:0.000px;-webkit-text-stroke:0.35px currentColor;-webkit-text-stroke:0.45px currentColor;">€ 90</div>
<div class="t" style="left:884.09px;top:724.37px;font-family:'Liberation Sans',sans-serif;font-size:22px;font-weight:400;color:#000000;letter-spacing:0.000px;-webkit-text-stroke:0.35px currentColor;-webkit-text-stroke:0.45px currentColor;">€ 47,12</div>
<div class="t" style="left:488.09px;top:756.37px;font-family:'Liberation Sans',sans-serif;font-size:22px;font-weight:400;color:#000000;letter-spacing:0.000px;-webkit-text-stroke:0.35px currentColor;-webkit-text-stroke:0.45px currentColor;">€ 33,30</div>
<div class="t" style="left:620.09px;top:756.37px;font-family:'Liberation Sans',sans-serif;font-size:22px;font-weight:400;color:#000000;letter-spacing:0.000px;-webkit-text-stroke:0.35px currentColor;-webkit-text-stroke:0.45px currentColor;">€ 36,60</div>
<div class="t" style="left:752.09px;top:756.37px;font-family:'Liberation Sans',sans-serif;font-size:22px;font-weight:400;color:#000000;letter-spacing:0.000px;-webkit-text-stroke:0.35px currentColor;-webkit-text-stroke:0.45px currentColor;">€ 52,90</div>
<div class="t" style="left:884.09px;top:756.37px;font-family:'Liberation Sans',sans-serif;font-size:22px;font-weight:400;color:#000000;letter-spacing:0.000px;-webkit-text-stroke:0.35px currentColor;-webkit-text-stroke:0.45px currentColor;">€ 41,90</div>
<div class="t" style="left:488.09px;top:788.37px;font-family:'Liberation Sans',sans-serif;font-size:22px;font-weight:400;color:#000000;letter-spacing:0.000px;-webkit-text-stroke:0.35px currentColor;-webkit-text-stroke:0.45px currentColor;">€ 19,23</div>
<div class="t" style="left:620.09px;top:788.37px;font-family:'Liberation Sans',sans-serif;font-size:22px;font-weight:400;color:#000000;letter-spacing:0.000px;-webkit-text-stroke:0.35px currentColor;-webkit-text-stroke:0.45px currentColor;">€ 42,90</div>
<div class="t" style="left:752.09px;top:788.37px;font-family:'Liberation Sans',sans-serif;font-size:22px;font-weight:400;color:#000000;letter-spacing:0.000px;-webkit-text-stroke:0.35px currentColor;-webkit-text-stroke:0.45px currentColor;">€ 42,80</div>
<div class="t" style="left:884.09px;top:788.37px;font-family:'Liberation Sans',sans-serif;font-size:22px;font-weight:400;color:#000000;letter-spacing:0.000px;-webkit-text-stroke:0.35px currentColor;-webkit-text-stroke:0.45px currentColor;">€ 39,77</div>
<div class="t" style="left:488.09px;top:820.37px;font-family:'Liberation Sans',sans-serif;font-size:22px;font-weight:400;color:#000000;letter-spacing:0.000px;-webkit-text-stroke:0.35px currentColor;-webkit-text-stroke:0.45px currentColor;">€ 65,12</div>
<div class="t" style="left:620.09px;top:820.37px;font-family:'Liberation Sans',sans-serif;font-size:22px;font-weight:400;color:#000000;letter-spacing:0.000px;-webkit-text-stroke:0.35px currentColor;-webkit-text-stroke:0.45px currentColor;">€ 50,10</div>
<div class="t" style="left:752.09px;top:820.37px;font-family:'Liberation Sans',sans-serif;font-size:22px;font-weight:400;color:#000000;letter-spacing:0.000px;-webkit-text-stroke:0.35px currentColor;-webkit-text-stroke:0.45px currentColor;">€ 67,30</div>
<div class="t" style="left:914.67px;top:820.37px;font-family:'Liberation Sans',sans-serif;font-size:22px;font-weight:400;color:#000000;letter-spacing:0.000px;-webkit-text-stroke:0.35px currentColor;-webkit-text-stroke:0.45px currentColor;">€ 15</div>
<div class="t" style="left:488.09px;top:852.37px;font-family:'Liberation Sans',sans-serif;font-size:22px;font-weight:400;color:#000000;letter-spacing:0.000px;-webkit-text-stroke:0.35px currentColor;-webkit-text-stroke:0.45px currentColor;">€ 29,80</div>
<div class="t" style="left:620.09px;top:852.37px;font-family:'Liberation Sans',sans-serif;font-size:22px;font-weight:400;color:#000000;letter-spacing:0.000px;-webkit-text-stroke:0.35px currentColor;-webkit-text-stroke:0.45px currentColor;">€ 38,60</div>
<div class="t" style="left:752.09px;top:852.37px;font-family:'Liberation Sans',sans-serif;font-size:22px;font-weight:400;color:#000000;letter-spacing:0.000px;-webkit-text-stroke:0.35px currentColor;-webkit-text-stroke:0.45px currentColor;">€ 52,20</div>
<div class="t" style="left:914.67px;top:852.37px;font-family:'Liberation Sans',sans-serif;font-size:22px;font-weight:400;color:#000000;letter-spacing:0.000px;-webkit-text-stroke:0.35px currentColor;-webkit-text-stroke:0.45px currentColor;">€ 38</div>
<div class="t" style="left:488.09px;top:884.37px;font-family:'Liberation Sans',sans-serif;font-size:22px;font-weight:400;color:#000000;letter-spacing:0.000px;-webkit-text-stroke:0.35px currentColor;-webkit-text-stroke:0.45px currentColor;">€ 43,34</div>
<div class="t" style="left:620.09px;top:884.37px;font-family:'Liberation Sans',sans-serif;font-size:22px;font-weight:400;color:#000000;letter-spacing:0.000px;-webkit-text-stroke:0.35px currentColor;-webkit-text-stroke:0.45px currentColor;">€ 63,40</div>
<div class="t" style="left:782.67px;top:884.37px;font-family:'Liberation Sans',sans-serif;font-size:22px;font-weight:400;color:#000000;letter-spacing:0.000px;-webkit-text-stroke:0.35px currentColor;-webkit-text-stroke:0.45px currentColor;">€ 35</div>
<div class="t" style="left:884.09px;top:884.37px;font-family:'Liberation Sans',sans-serif;font-size:22px;font-weight:400;color:#000000;letter-spacing:0.000px;-webkit-text-stroke:0.35px currentColor;-webkit-text-stroke:0.45px currentColor;">€ 62,90</div>
<div class="t" style="left:488.09px;top:916.37px;font-family:'Liberation Sans',sans-serif;font-size:22px;font-weight:400;color:#000000;letter-spacing:0.000px;-webkit-text-stroke:0.35px currentColor;-webkit-text-stroke:0.45px currentColor;">€ 12,90</div>
<div class="t" style="left:632.33px;top:916.37px;font-family:'Liberation Sans',sans-serif;font-size:22px;font-weight:400;color:#000000;letter-spacing:0.000px;-webkit-text-stroke:0.35px currentColor;-webkit-text-stroke:0.45px currentColor;">€ 9,71</div>
<div class="t" style="left:752.09px;top:916.37px;font-family:'Liberation Sans',sans-serif;font-size:22px;font-weight:400;color:#000000;letter-spacing:0.000px;-webkit-text-stroke:0.35px currentColor;-webkit-text-stroke:0.45px currentColor;">€ 88,80</div>
<div class="t" style="left:884.09px;top:916.37px;font-family:'Liberation Sans',sans-serif;font-size:22px;font-weight:400;color:#000000;letter-spacing:0.000px;-webkit-text-stroke:0.35px currentColor;-webkit-text-stroke:0.45px currentColor;">€ 57,60</div>
<div class="t" style="left:488.09px;top:948.37px;font-family:'Liberation Sans',sans-serif;font-size:22px;font-weight:400;color:#000000;letter-spacing:0.000px;-webkit-text-stroke:0.35px currentColor;-webkit-text-stroke:0.45px currentColor;">€ 52,20</div>
<div class="t" style="left:620.09px;top:948.37px;font-family:'Liberation Sans',sans-serif;font-size:22px;font-weight:400;color:#000000;letter-spacing:0.000px;-webkit-text-stroke:0.35px currentColor;-webkit-text-stroke:0.45px currentColor;">€ 55,55</div>
<div class="t" style="left:752.09px;top:948.37px;font-family:'Liberation Sans',sans-serif;font-size:22px;font-weight:400;color:#000000;letter-spacing:0.000px;-webkit-text-stroke:0.35px currentColor;-webkit-text-stroke:0.45px currentColor;">€ 32,30</div>
<div class="t" style="left:884.09px;top:948.37px;font-family:'Liberation Sans',sans-serif;font-size:22px;font-weight:400;color:#000000;letter-spacing:0.000px;-webkit-text-stroke:0.35px currentColor;-webkit-text-stroke:0.45px currentColor;">€ 37,36</div>
<div style="left:955px;top:955px;width:7px;height:7px;background:#3a4aa0;"></div>
<div style="left:302px;top:480px;width:794px;height:4px;background:#217346;"></div>
<div style="left:302px;top:480px;width:4px;height:582px;background:#217346;"></div>
<div style="left:1092px;top:480px;width:4px;height:572px;background:#217346;"></div>
<div style="left:302px;top:1058px;width:784px;height:4px;background:#217346;"></div>
<div style="left:1086px;top:1052px;width:14px;height:14px;background:#ffffff;"></div>
<div style="left:1088px;top:1054px;width:10px;height:10px;background:#217346;"></div>
<div style="left:46px;top:1698px;width:2834px;height:4px;background:#ffffff;"></div>
<div style="left:46px;top:1698px;width:2834px;height:2px;background:#d4d4d4;"></div>
<div style="left:0px;top:1698px;width:44px;height:4px;background:#171717;"></div>
<div style="left:0px;top:1702px;width:2880px;height:52px;background:#333333;"></div>
<div style="left:0px;top:1702px;width:2880px;height:2px;background:#5e5e5e;"></div>
<div style="left:0px;top:1755px;width:2880px;height:43px;background:linear-gradient(#4b4b4b,#3a3a3a);"></div>
<div style="left:0px;top:1754px;width:2880px;height:1.5px;background:#050505;"></div>
<svg style="left:29px;top:1720px" width="16" height="21" viewBox="0 0 16 21"><path d="M15 0V21L0 10.5Z" fill="#6e6e6e"/></svg>
<svg style="left:76px;top:1720px" width="15" height="21" viewBox="0 0 15 21"><path d="M0 0V21L15 10.5Z" fill="#6e6e6e"/></svg>
<div style="left:120px;top:1700px;width:160px;height:48px;background:#5e5e5e;border-radius:0 0 6px 6px"></div>
<div style="left:122px;top:1700px;width:156px;height:46px;background:#ffffff;border-radius:0 0 4px 4px"></div>
<div class="t" style="left:159.00px;top:1728.20px;font-family:'Liberation Sans',sans-serif;font-size:22.5px;font-weight:700;color:#1e7b4b;letter-spacing:0.000px;">Foglio1</div>
<div style="left:308px;top:1726px;width:20px;height:3.5px;background:#b4b4b4;"></div>
<div style="left:316.5px;top:1718px;width:3.5px;height:20px;background:#b4b4b4;"></div>
<div style="left:353px;top:1704px;width:2px;height:42px;background:#5a5a5a;"></div>
<div class="t" style="left:49.50px;top:1778.03px;font-family:'Liberation Sans',sans-serif;font-size:23px;font-weight:400;color:#ffffff;letter-spacing:0.947px;-webkit-text-stroke:0.35px currentColor;-webkit-text-stroke:0.1px currentColor;">Pronto</div>
<div class="t" style="left:199.00px;top:1778.03px;font-family:'Liberation Sans',sans-serif;font-size:23px;font-weight:400;color:#ffffff;letter-spacing:1.218px;-webkit-text-stroke:0.35px currentColor;-webkit-text-stroke:0.1px currentColor;">Accessibilità: conforme</div>
<div class="t" style="left:1581.00px;top:1777.53px;font-family:'Liberation Sans',sans-serif;font-size:23px;font-weight:400;color:#ffffff;letter-spacing:1.390px;-webkit-text-stroke:0.35px currentColor;-webkit-text-stroke:0.1px currentColor;">Media: 42,669375</div>
<div class="t" style="left:1830.00px;top:1777.53px;font-family:'Liberation Sans',sans-serif;font-size:23px;font-weight:400;color:#ffffff;letter-spacing:1.230px;-webkit-text-stroke:0.35px currentColor;-webkit-text-stroke:0.1px currentColor;">Conteggio: 52</div>
<div class="t" style="left:2031.50px;top:1777.53px;font-family:'Liberation Sans',sans-serif;font-size:23px;font-weight:400;color:#ffffff;letter-spacing:0.987px;-webkit-text-stroke:0.35px currentColor;-webkit-text-stroke:0.1px currentColor;">Somma: 2048,13</div>
<div style="left:2242px;top:1755px;width:74px;height:43px;background:#5a5a5a;"></div>
<div class="t" style="left:2768.50px;top:1777.53px;font-family:'Liberation Sans',sans-serif;font-size:23px;font-weight:400;color:#ffffff;letter-spacing:0.891px;-webkit-text-stroke:0.35px currentColor;-webkit-text-stroke:0.1px currentColor;">100%</div>
<div style="left:2474px;top:1775px;width:17px;height:4px;background:#ffffff;border-radius:1px"></div>
<div style="left:2504px;top:1773.5px;width:200px;height:8.5px;background:#7a7a7a;border-radius:4px"></div>
<div style="left:2588px;top:1761px;width:32px;height:32px;background:#a3a3a3;border-radius:50%"></div>
<div style="left:2717.5px;top:1775px;width:16.5px;height:4px;background:#ffffff;border-radius:1px"></div>
<div style="left:2723.8px;top:1768.5px;width:4px;height:17px;background:#ffffff;border-radius:1px"></div>
<div class="t" style="left:1395.50px;top:40.81px;font-family:'Liberation Sans',sans-serif;font-size:26.5px;font-weight:700;color:#ffffff;letter-spacing:-0.143px;">Cartel1</div>
<div class="t" style="left:23.00px;top:105.14px;font-family:'Liberation Sans',sans-serif;font-size:27px;font-weight:700;color:#e2e2e2;letter-spacing:-1.005px;">Home</div>
<div class="t" style="left:143.50px;top:105.14px;font-family:'Liberation Sans',sans-serif;font-size:27px;font-weight:700;color:#e2e2e2;letter-spacing:-0.260px;">Inserisci</div>
<div style="left:142px;top:126px;width:110px;height:6px;background:#e0e0e0;border-radius:3px"></div>
<div class="t" style="left:298.60px;top:105.14px;font-family:'Liberation Sans',sans-serif;font-size:27px;font-weight:700;color:#e2e2e2;letter-spacing:-1.036px;">Disegno</div>
<div class="t" style="left:451.30px;top:105.14px;font-family:'Liberation Sans',sans-serif;font-size:27px;font-weight:700;color:#e2e2e2;letter-spacing:-0.868px;">Layout di pagina</div>
<div class="t" style="left:705.30px;top:105.14px;font-family:'Liberation Sans',sans-serif;font-size:27px;font-weight:700;color:#e2e2e2;letter-spacing:-1.236px;">Formule</div>
<div class="t" style="left:855.10px;top:105.14px;font-family:'Liberation Sans',sans-serif;font-size:27px;font-weight:700;color:#e2e2e2;letter-spacing:-1.172px;">Dati</div>
<div class="t" style="left:953.80px;top:105.14px;font-family:'Liberation Sans',sans-serif;font-size:27px;font-weight:700;color:#e2e2e2;letter-spacing:-1.445px;">Revisione</div>
<div class="t" style="left:1123.00px;top:105.14px;font-family:'Liberation Sans',sans-serif;font-size:27px;font-weight:700;color:#e2e2e2;letter-spacing:-0.620px;">Visualizza</div>
<div style="left:2685px;top:84px;width:175px;height:47px;background:#5c5c5c;border-radius:7px"></div>
<div class="t" style="left:2737.70px;top:109.83px;font-family:'Liberation Sans',sans-serif;font-size:25px;font-weight:700;color:#ececec;letter-spacing:-0.611px;">Condividi</div>
<div class="t" style="left:19.60px;top:310.51px;font-family:'Liberation Sans',sans-serif;font-size:24.5px;font-weight:400;color:#d6d6d6;letter-spacing:0.000px;-webkit-text-stroke:0.35px currentColor;transform:scaleX(0.88);transform-origin:0 0;-webkit-text-stroke:0.6px currentColor;">C4</div>
<svg style="left:145px;top:294px" width="16" height="38" viewBox="0 0 16 38"><path d="M8 1L15 13H1Z M1 25H15L8 37Z" fill="#b4b4b4"/></svg>
<svg style="left:198px;top:301px" width="26" height="24" viewBox="0 0 26 24"><path d="M3 3L23 21M23 3L3 21" stroke="#595959" stroke-width="4"/></svg>
<svg style="left:254px;top:301px" width="32" height="24" viewBox="0 0 32 24"><path d="M3 11L12 20L29 3" stroke="#595959" stroke-width="4.5" fill="none"/></svg>
<svg style="left:0;top:286px" width="400" height="52" viewBox="0 286 400 52"><path d="M333.3 300.3 Q331.5 297.6 328.8 299.6 Q326.6 301.6 325.2 310 Q323.4 322 320.6 325.2 Q318.6 327.4 316.8 325.4 M321.4 306.9 H331.4" fill="none" stroke="#9a9a9a" stroke-width="2.3" stroke-linecap="round"/><circle cx="333.2" cy="301" r="1.9" fill="#9a9a9a"/><circle cx="317" cy="325.2" r="1.9" fill="#9a9a9a"/><path d="M330.6 313.2 Q332.6 310.8 334.6 313.2 L340 320.8 Q342.2 323.6 344.2 321.2 M343.6 313 Q341.6 311 339.6 313.2 L335 320.6 Q333 323.6 330.8 321.4" fill="none" stroke="#9a9a9a" stroke-width="2.2" stroke-linecap="round"/></svg>
<svg style="left:2857px;top:306px" width="16" height="13" viewBox="0 0 16 13"><path d="M0 0H16L8 13Z" fill="#b0b0b0"/></svg>
<svg style="left:0;top:0" width="2880" height="76" viewBox="0 0 2880 76"><path d="M51.2 36.6 L63.9 25.2 L76.7 36.6 V51.3 Q76.7 52.8 75.2 52.8 H69.7 Q68.2 52.8 68.2 51.3 V44 Q68.2 42.2 66.4 42.2 H61.6 Q59.8 42.2 59.8 44 V51.3 Q59.8 52.8 58.3 52.8 H52.7 Q51.2 52.8 51.2 51.3 Z" fill="none" stroke="#fff" stroke-width="2.1" stroke-linejoin="round"/><path d="M107.5 26.9 H125.2 L130.8 32.4 V50.5 Q130.8 53 128.3 53 H107.5 Q105.1 53 105.1 50.5 V29.4 Q105.1 26.9 107.5 26.9 Z" fill="none" stroke="#fff" stroke-width="2.1"/><path d="M111 26.9 V32.6 Q111 34.8 113.2 34.8 H120.7 Q122.9 34.8 122.9 32.6 V26.9 M109 53 V43.3 Q109 41.1 111.2 41.1 H124.7 Q126.9 41.1 126.9 43.3 V53" fill="none" stroke="#fff" stroke-width="2.1"/><path d="M161 23.9 V35.1 H172 M161 35.1 L171.2 26.6 A8.8 8.8 0 0 1 183.6 39 L165.5 55" fill="none" stroke="#fff" stroke-width="2.1" stroke-linecap="round" stroke-linejoin="miter"/><path d="M204.5 36.5 L210.2 43.5 L215.9 36.5" fill="none" stroke="#fff" stroke-width="2.2"/><path d="M267 39 A15 15 0 1 1 262.8 29.2" fill="none" stroke="#8c8c8c" stroke-width="1.9"/><path d="M265 24 V33.3 H256" fill="none" stroke="#8c8c8c" stroke-width="1.9"/><circle cx="295.8" cy="39.9" r="2.8" fill="#fff"/><circle cx="305.9" cy="39.9" r="2.8" fill="#fff"/><circle cx="316" cy="39.9" r="2.8" fill="#fff"/><circle cx="2769" cy="36.8" r="10" fill="none" stroke="#fff" stroke-width="2.3"/><path d="M2776.5 44.3 L2785.5 53.3" stroke="#fff" stroke-width="2.3" stroke-linecap="round"/><circle cx="2833.8" cy="36.4" r="4.6" fill="none" stroke="#fff" stroke-width="2.2"/><path d="M2825.4 46 H2842.8 V47.3 A8.7 8.3 0 0 1 2825.4 47.3 Z" fill="none" stroke="#fff" stroke-width="2.2" stroke-linejoin="round"/><path d="M2844 25.3 H2852.2 Q2854.6 25.3 2854.6 27.7 V32.5 Q2854.6 34.9 2852.2 34.9 H2849 L2845.3 38.6 L2844.6 34.9 Q2841.6 34.9 2841.6 32.5 V27.7 Q2841.6 25.3 2844 25.3 Z" fill="none" stroke="#fff" stroke-width="2.1" stroke-linejoin="round"/></svg>
<div class="t" style="left:25.00px;top:234.55px;font-family:'Liberation Sans',sans-serif;font-size:21.5px;font-weight:400;color:#ffffff;letter-spacing:0.143px;-webkit-text-stroke:0.35px currentColor;">Tabella</div>
<div class="t" style="left:35.50px;top:257.55px;font-family:'Liberation Sans',sans-serif;font-size:21.5px;font-weight:400;color:#ffffff;letter-spacing:0.645px;-webkit-text-stroke:0.35px currentColor;">pivot</div>
<div class="t" style="left:108.50px;top:234.55px;font-family:'Liberation Sans',sans-serif;font-size:21.5px;font-weight:400;color:#ffffff;letter-spacing:0.456px;-webkit-text-stroke:0.35px currentColor;">Tabelle pivot</div>
<div class="t" style="left:116.50px;top:257.55px;font-family:'Liberation Sans',sans-serif;font-size:21.5px;font-weight:400;color:#ffffff;letter-spacing:0.741px;-webkit-text-stroke:0.35px currentColor;">consigliate</div>
<div class="t" style="left:248.80px;top:234.15px;font-family:'Liberation Sans',sans-serif;font-size:21.5px;font-weight:400;color:#a0a0a0;letter-spacing:0.143px;-webkit-text-stroke:0.35px currentColor;">Tabella</div>
<div class="t" style="left:370.00px;top:234.55px;font-family:'Liberation Sans',sans-serif;font-size:21.5px;font-weight:400;color:#ffffff;letter-spacing:0.397px;-webkit-text-stroke:0.35px currentColor;">Immagini</div>
<div class="t" style="left:486.00px;top:234.55px;font-family:'Liberation Sans',sans-serif;font-size:21.5px;font-weight:400;color:#ffffff;letter-spacing:-0.031px;-webkit-text-stroke:0.35px currentColor;">Forme</div>
<div class="t" style="left:578.00px;top:234.55px;font-family:'Liberation Sans',sans-serif;font-size:21.5px;font-weight:400;color:#ffffff;letter-spacing:-0.027px;-webkit-text-stroke:0.35px currentColor;">Icone</div>
<div class="t" style="left:807.00px;top:179.15px;font-family:'Liberation Sans',sans-serif;font-size:21.5px;font-weight:400;color:#ffffff;letter-spacing:0.634px;-webkit-text-stroke:0.35px currentColor;">Ottenere componenti aggiuntivi</div>
<div class="t" style="left:807.00px;top:242.55px;font-family:'Liberation Sans',sans-serif;font-size:21.5px;font-weight:400;color:#ffffff;letter-spacing:0.665px;-webkit-text-stroke:0.35px currentColor;">Miei componenti aggiuntivi</div>
<div class="t" style="left:1249.50px;top:234.55px;font-family:'Liberation Sans',sans-serif;font-size:21.5px;font-weight:400;color:#ffffff;letter-spacing:0.396px;-webkit-text-stroke:0.35px currentColor;">Grafici</div>
<div class="t" style="left:1231.60px;top:257.55px;font-family:'Liberation Sans',sans-serif;font-size:21.5px;font-weight:400;color:#ffffff;letter-spacing:0.558px;-webkit-text-stroke:0.35px currentColor;">consigliati</div>
<div class="t" style="left:1574.50px;top:234.55px;font-family:'Liberation Sans',sans-serif;font-size:21.5px;font-weight:400;color:#ffffff;letter-spacing:0.188px;-webkit-text-stroke:0.35px currentColor;">Mappe</div>
<div class="t" style="left:1666.00px;top:234.15px;font-family:'Liberation Sans',sans-serif;font-size:21.5px;font-weight:400;color:#ffffff;letter-spacing:0.448px;-webkit-text-stroke:0.35px currentColor;">Grafico</div>
<div class="t" style="left:1678.00px;top:257.55px;font-family:'Liberation Sans',sans-serif;font-size:21.5px;font-weight:400;color:#ffffff;letter-spacing:0.645px;-webkit-text-stroke:0.35px currentColor;">pivot</div>
<div class="t" style="left:1802.00px;top:234.55px;font-family:'Liberation Sans',sans-serif;font-size:21.5px;font-weight:400;color:#ffffff;letter-spacing:0.646px;-webkit-text-stroke:0.35px currentColor;">Grafici</div>
<div class="t" style="left:1790.00px;top:257.55px;font-family:'Liberation Sans',sans-serif;font-size:21.5px;font-weight:400;color:#ffffff;letter-spacing:0.494px;-webkit-text-stroke:0.35px currentColor;">sparkline</div>
<div class="t" style="left:1980.70px;top:178.35px;font-family:'Liberation Sans',sans-serif;font-size:21.5px;font-weight:400;color:#8c8c8c;letter-spacing:0.558px;-webkit-text-stroke:0.35px currentColor;">Filtro dati</div>
<div class="t" style="left:1981.00px;top:242.05px;font-family:'Liberation Sans',sans-serif;font-size:21.5px;font-weight:400;color:#8c8c8c;letter-spacing:0.328px;-webkit-text-stroke:0.35px currentColor;">Sequenza temporale</div>
<div class="t" style="left:2246.00px;top:234.25px;font-family:'Liberation Sans',sans-serif;font-size:21.5px;font-weight:400;color:#ffffff;letter-spacing:0.393px;-webkit-text-stroke:0.35px currentColor;">Collegamento</div>
<div class="t" style="left:2456.50px;top:234.25px;font-family:'Liberation Sans',sans-serif;font-size:21.5px;font-weight:400;color:#ffffff;letter-spacing:0.211px;-webkit-text-stroke:0.35px currentColor;">Nuovo</div>
<div class="t" style="left:2435.00px;top:257.35px;font-family:'Liberation Sans',sans-serif;font-size:21.5px;font-weight:400;color:#ffffff;letter-spacing:0.661px;-webkit-text-stroke:0.35px currentColor;">commento</div>
<div class="t" style="left:2609.00px;top:234.25px;font-family:'Liberation Sans',sans-serif;font-size:21.5px;font-weight:400;color:#ffffff;letter-spacing:0.252px;-webkit-text-stroke:0.35px currentColor;">Testo</div>
<div class="t" style="left:2736.00px;top:234.25px;font-family:'Liberation Sans',sans-serif;font-size:21.5px;font-weight:400;color:#ffffff;letter-spacing:0.350px;-webkit-text-stroke:0.35px currentColor;">Simboli</div>
<svg style="left:0;top:1700px" width="2880" height="98" viewBox="0 1700 2880 98"><circle cx="175.3" cy="1767" r="3.6" fill="none" stroke="#fff" stroke-width="1.8"/><path d="M169.6 1774.2 Q165 1772.6 163.8 1771.6 Q161.8 1769.6 164.4 1768.6 Q166.6 1768 170 1769.6 Q175.3 1772 180.6 1769.6 Q184 1768 186.2 1768.6 Q188.8 1769.6 186.8 1771.6 Q185.2 1772.8 180.1 1774.3 V1779.6 M169.6 1774.2 Q170.8 1776.5 169.8 1781 L167.6 1787.6 Q166.8 1790.6 169.2 1790.6 Q170.6 1790.6 171.3 1789.6" fill="none" stroke="#fff" stroke-width="1.8" stroke-linecap="round" stroke-linejoin="round"/><path d="M176.1 1784.1 L182.4 1790.6 L193.2 1779.9" fill="none" stroke="#fff" stroke-width="1.9"/><rect x="2267" y="1765" width="23.9" height="23.8" rx="1.8" fill="none" stroke="#fff" stroke-width="2"/><path d="M2275 1765 V1788.8 M2283 1765 V1788.8 M2267 1773 H2290.9 M2267 1781 H2290.9" stroke="#fff" stroke-width="1.8"/><rect x="2338" y="1765" width="25.9" height="23.8" rx="1.8" fill="none" stroke="#fff" stroke-width="2"/><rect x="2344.2" y="1769.1" width="13.6" height="15.8" fill="none" stroke="#fff" stroke-width="1.8"/><path d="M2347 1773.3 H2355 M2347 1777 H2355 M2347 1780.7 H2355" stroke="#fff" stroke-width="1.7"/><rect x="2409.1" y="1765" width="25.7" height="23.8" rx="1.8" fill="none" stroke="#fff" stroke-width="2"/><path d="M2416.9 1765 V1779.4 M2424.7 1765 V1779.4 M2409.1 1779.4 H2425.6" stroke="#fff" stroke-width="1.8"/></svg>
<svg style="left:0;top:76px" width="2880" height="210" viewBox="0 76 2880 210"><rect x="344" y="144" width="2" height="124" fill="#565656"/><rect x="734" y="144" width="2" height="124" fill="#565656"/><rect x="1206" y="144" width="2" height="124" fill="#565656"/><rect x="1764" y="144" width="2" height="124" fill="#565656"/><rect x="1906" y="144" width="2" height="124" fill="#565656"/><rect x="2220" y="144" width="2" height="124" fill="#565656"/><rect x="2410" y="144" width="2" height="124" fill="#565656"/><rect x="2566" y="144" width="2" height="124" fill="#565656"/><rect x="2704" y="144" width="2" height="124" fill="#565656"/><rect x="33" y="155.1" width="53.9" height="53.7" fill="none" stroke="#e6e6e6" stroke-width="2.2"/><rect x="39" y="161" width="10" height="10" fill="#616161" stroke="#a3a3a3" stroke-width="2"/><rect x="55" y="161" width="26" height="10" fill="#616161" stroke="#a3a3a3" stroke-width="2"/><rect x="39" y="177" width="10" height="26" fill="#616161" stroke="#a3a3a3" stroke-width="2"/><path d="M74.9 177.5 V196.8 H57.5 M68.8 183.5 L74.9 177.3 L81.1 183.5 M63.6 190.7 L57.3 196.8 L63.6 203" fill="none" stroke="#3d9fe3" stroke-width="2.3"/><path d="M197.9 177.7 V155.1 H146 V208.8 H188.5" fill="none" stroke="#e6e6e6" stroke-width="2.2"/><rect x="151" y="161" width="10" height="10" fill="#616161" stroke="#a3a3a3" stroke-width="2"/><rect x="167" y="161" width="26" height="10" fill="#616161" stroke="#a3a3a3" stroke-width="2"/><rect x="151" y="177" width="10" height="26" fill="#616161" stroke="#a3a3a3" stroke-width="2"/><path d="M186.4 190.5 A8.2 8.2 0 1 1 199.5 197 Q193 201.5 193 206 V207" fill="none" stroke="#3d9fe3" stroke-width="2.6"/><rect x="190.8" y="209.8" width="4.4" height="4" fill="#3d9fe3"/><rect x="256.9" y="155" width="54.2" height="54.1" fill="none" stroke="#6e6e6e" stroke-width="1.9"/><path d="M256.9 166.7 H311.1 M256.9 180.8 H311.1 M256.9 194.7 H311.1 M274.8 166.7 V209.1 M293 166.7 V209.1" fill="none" stroke="#6e6e6e" stroke-width="1.9"/><path d="M259.9 157.8 H271.9 L265.9 164 Z" fill="#3b6080"/><path d="M278 157.8 H290 L284 164 Z" fill="#3b6080"/><path d="M295.9 157.8 H307.9 L301.9 164 Z" fill="#3b6080"/><rect x="375" y="161" width="54.1" height="39.8" fill="none" stroke="#e0e0e0" stroke-width="2.1"/><path d="M376 186.3 L389.9 172 L407.3 189 L414.1 182.3 L428 195.8 V199.8 H376 Z" fill="#0063b1"/><path d="M376 186.3 L389.9 172 L417.5 199.8 M407.3 189 L414.1 182.3 L428 195.8" fill="none" stroke="#78bbf0" stroke-width="2"/><circle cx="418.6" cy="171" r="5.1" fill="#f3ab5a"/><circle cx="421.4" cy="168.3" r="4.4" fill="#2b2b2b"/><path d="M445.4 180.2 L450.4 186.2 L455.4 180.2" fill="none" stroke="#ffffff" stroke-width="2.6" stroke-linecap="round" stroke-linejoin="round"/><rect x="478" y="155" width="36" height="36.2" fill="#0063b1" stroke="#78bbf0" stroke-width="2"/><circle cx="512.9" cy="189.7" r="22.6" fill="#2b2b2b"/><circle cx="512.9" cy="189.7" r="18.8" fill="none" stroke="#d8d8d8" stroke-width="2.1"/><path d="M547.8 180.2 L552.8 186.2 L557.8 180.2" fill="none" stroke="#ffffff" stroke-width="2.6" stroke-linecap="round" stroke-linejoin="round"/><path d="M578 168.5 Q586 175 603.5 175.5 L606 172 L620 172 Q617.5 177.2 611 178.8 Q599 181 594 189.5 L593 197.5 Q578 195.5 578 181 Z" fill="#78bbf0" stroke="#78bbf0" stroke-width="4" stroke-linejoin="round"/><path d="M602.4 164.8 A9.7 9.7 0 0 1 621.3 161.6 L631.5 165.3 Q628.5 170.8 621.4 170.8 A9.7 9.7 0 0 1 602.4 164.8 Z" fill="#78bbf0" stroke="#78bbf0" stroke-width="4" stroke-linejoin="round"/><path d="M578 168.5 Q586 175 603.5 175.5 L606 172 L620 172 Q617.5 177.2 611 178.8 Q599 181 594 189.5 L593 197.5 Q578 195.5 578 181 Z" fill="#0063b1"/><path d="M602.4 164.8 A9.7 9.7 0 0 1 621.3 161.6 L631.5 165.3 Q628.5 170.8 621.4 170.8 A9.7 9.7 0 0 1 602.4 164.8 Z" fill="#0063b1"/><path d="M629.2 178.2 Q620.5 179.2 612.5 180.2 Q604 181.5 599.5 187 Q594.5 193.5 596.3 201 Q599 208.8 608.3 209.2 Q620.5 209.4 626.3 198.5 Q629.8 190.5 629.2 178.2 Z" fill="#2b2b2b" stroke="#2b2b2b" stroke-width="6"/><path d="M629.2 178.2 Q620.5 179.2 612.5 180.2 Q604 181.5 599.5 187 Q594.5 193.5 596.3 201 Q599 208.8 608.3 209.2 Q620.5 209.4 626.3 198.5 Q629.8 190.5 629.2 178.2 Z" fill="#2b2b2b" stroke="#d0d0d0" stroke-width="2"/><path d="M614.3 191.8 Q603 197 591.5 213" fill="none" stroke="#d0d0d0" stroke-width="2"/><path d="M666.1 151.8 L678.5 158.6 V173.6 L666.1 180 L653.4 173.6 V158.6 Z M666.1 180 V165.6 L678.5 158.6 M653.4 158.6 L660.7 162.6" fill="none" stroke="#1a78d0" stroke-width="2.1" stroke-linejoin="round"/><path d="M696.1 164 L701.1 170 L706.1 164" fill="none" stroke="#ffffff" stroke-width="2.6" stroke-linecap="round" stroke-linejoin="round"/><path d="M651.5 198.5 H671.4 L680.8 206.5 H663.5 V213.5 H651.5 L661 206 Z" fill="#2e9a50" stroke="#a2e1ad" stroke-width="1.6" stroke-linejoin="round"/><rect x="664.3" y="209.2" width="18.7" height="12.7" fill="#2b2b2b" stroke="#d8d8d8" stroke-width="2"/><path d="M667.8 213 H669.5 M671.5 213 H680 M667.8 217.3 H669.5 M671.5 217.3 H680" stroke="#a8a8a8" stroke-width="1.7"/><path d="M696.1 207.9 L701.1 213.9 L706.1 207.9" fill="none" stroke="#ffffff" stroke-width="2.6" stroke-linecap="round" stroke-linejoin="round"/><path d="M655.5 245 V238.8 H661 M664.5 238.8 H670.5 M674 238.8 H678.5 V245 M655.5 248.5 V255 M678.5 248.5 V257" fill="none" stroke="#a0a0a0" stroke-width="1.8"/><path d="M651.8 257.5 H655.5 L657.5 255.8 H665 L667 257.5 H671 V269.5 H651.8 Z" fill="#5e5e5e" stroke="#d8d8d8" stroke-width="1.8" stroke-linejoin="round"/><circle cx="661" cy="262.8" r="2.8" fill="none" stroke="#d8d8d8" stroke-width="1.8"/><path d="M673 265 H683 M678 260 V270" stroke="#62db7e" stroke-width="2"/><path d="M696.1 252.2 L701.1 258.2 L706.1 252.2" fill="none" stroke="#ffffff" stroke-width="2.6" stroke-linecap="round" stroke-linejoin="round"/><path d="M764.1 165.2 H778 V192.8 M764.1 178.3 H791.7 V192.8 H764.1 Z M764.1 165.2 V192.8" fill="none" stroke="#ea4400" stroke-width="2.2"/><path d="M781 168.8 H794.9 M788 161.9 V176.1" stroke="#ea4400" stroke-width="2.2"/><path d="M770.4 240.9 V234.7 L781.3 228.5 L792.5 234.7 V248.2 L781.3 254.3 L778.3 252.4" fill="none" stroke="#1e7bd0" stroke-width="1.8" stroke-linejoin="round"/><path d="M770.9 242.4 L776.5 245.6 V252.2 L770.9 255.4 L765.3 252.2 V245.6 Z" fill="none" stroke="#1e7bd0" stroke-width="1.8" stroke-linejoin="round"/><path d="M1088.6 239.5 L1093.6 245.5 L1098.6 239.5" fill="none" stroke="#ffffff" stroke-width="2.2" stroke-linecap="round" stroke-linejoin="round"/><path d="M1163.5 153 L1170.5 159 H1177 V172 H1163.5 Z" fill="#2b7cd3"/><path d="M1163.5 153 L1170.5 159.5 L1163.5 166 L1156.5 159.5 Z" fill="#41a5ee"/><circle cx="1163.5" cy="172.8" r="6.5" fill="#103f91"/><rect x="1149" y="158.9" width="14" height="14" fill="#185abd"/><path d="M1152.6 162 L1156 169.8 L1159.4 162" fill="none" stroke="#fff" stroke-width="1.9"/><rect x="1147" y="193.8" width="32" height="32.4" fill="#ffb829"/><path d="M1151.5 197.8 L1155.8 199 V215.5 L1161.5 212.2 L1158.8 209 L1157.8 204.5 L1172.5 209.8 V212.3 L1157 222 L1151.5 219 Z" fill="#ffffff"/><rect x="1147" y="237.9" width="32" height="31.9" fill="#168457"/><path d="M1149 240.5 H1177 V243.5 H1149 Z M1149 246.5 H1162.5 V249.5 H1149 Z M1149 252.5 H1157 V255.5 H1149 Z" fill="#8fc8ae"/><circle cx="1168" cy="248.5" r="2.6" fill="#ffffff"/><path d="M1159.5 266 V257 Q1159.5 253.5 1163 253.5 H1173 Q1176.5 253.5 1176.5 257 V266 H1174 V258 H1172.5 V267.5 H1163.5 V258 H1162 V266 Z" fill="#e9f4ee"/><rect x="1242.1" y="155.1" width="15.900000000000091" height="53.80000000000001" fill="#5f5f5f" stroke="#9e9e9e" stroke-width="2"/><rect x="1259.0" y="175.2" width="12.900000000000091" height="33.70000000000002" fill="none" stroke="#e0e0e0" stroke-width="2"/><path d="M1280.5 164 A7.3 7.3 0 1 1 1292.5 169.8 Q1286 174 1285.8 178.5 V181.5" fill="none" stroke="#3d9fe3" stroke-width="2.7"/><rect x="1284" y="183.9" width="4" height="4" fill="#3d9fe3"/><path d="M1312 180 L1317.0 186 L1322 180" fill="none" stroke="#ffffff" stroke-width="2.6" stroke-linecap="round" stroke-linejoin="round"/><rect x="1349.1" y="165.0" width="9.100000000000136" height="15.900000000000006" fill="#5f5f5f" stroke="#9e9e9e" stroke-width="2"/><rect x="1359.2" y="151.2" width="10.599999999999909" height="29.700000000000017" fill="none" stroke="#e0e0e0" stroke-width="2"/><rect x="1370.8" y="157.1" width="8.200000000000045" height="23.80000000000001" fill="#0063b1" stroke="#7cbdf0" stroke-width="2"/><path d="M1392.9 164 L1397.9 170 L1402.9 164" fill="none" stroke="#ffffff" stroke-width="2.6" stroke-linecap="round" stroke-linejoin="round"/><path d="M1349.8 206.1 L1353.8 193.4 L1365.9 212.1 L1378 193.4" fill="none" stroke="#d8d8d8" stroke-width="2"/><rect x="1348.0" y="204.29999999999998" width="3.6" height="3.6" fill="#d8d8d8"/><rect x="1352.0" y="191.6" width="3.6" height="3.6" fill="#d8d8d8"/><rect x="1364.1000000000001" y="210.29999999999998" width="3.6" height="3.6" fill="#d8d8d8"/><rect x="1376.2" y="191.6" width="3.6" height="3.6" fill="#d8d8d8"/><path d="M1350 215.5 L1368.1 189.4 L1378 206.1" fill="none" stroke="#3d9fe3" stroke-width="2"/><rect x="1348.1" y="213.6" width="3.8" height="3.8" fill="#3d9fe3"/><rect x="1366.1999999999998" y="187.5" width="3.8" height="3.8" fill="#3d9fe3"/><rect x="1376.1" y="204.2" width="3.8" height="3.8" fill="#3d9fe3"/><path d="M1392.9 202 L1397.9 208 L1402.9 202" fill="none" stroke="#ffffff" stroke-width="2.6" stroke-linecap="round" stroke-linejoin="round"/><path d="M1363.2 227.3 A14 14 0 0 0 1349.3 241.3 H1363.2 Z" fill="#5f5f5f" stroke="#9e9e9e" stroke-width="2"/><path d="M1367 229.2 A14 14 0 1 1 1351.2 245 H1367 Z" fill="#0063b1" stroke="#7cbdf0" stroke-width="2"/><path d="M1392.9 240 L1397.9 246 L1402.9 240" fill="none" stroke="#ffffff" stroke-width="2.6" stroke-linecap="round" stroke-linejoin="round"/><rect x="1420.9" y="150.9" width="14.899999999999864" height="30.0" fill="#5f5f5f" stroke="#9e9e9e" stroke-width="2"/><rect x="1436.8" y="150.9" width="14.299999999999955" height="17.099999999999994" fill="none" stroke="#e0e0e0" stroke-width="2"/><rect x="1436.8" y="169.0" width="14.299999999999955" height="11.900000000000006" fill="#0063b1" stroke="#7cbdf0" stroke-width="2"/><path d="M1465 164 L1470.0 170 L1475 164" fill="none" stroke="#ffffff" stroke-width="2.6" stroke-linecap="round" stroke-linejoin="round"/><path d="M1422.9 219 V200.8 H1429 V188.9 H1435 V196.8 H1441.2 V207.1 H1447.1 V219 Z" fill="#0063b1" stroke="#7cbdf0" stroke-width="2"/><path d="M1429 200.8 V219 M1435 196.8 V219 M1441.2 207.1 V219" stroke="#7cbdf0" stroke-width="2"/><path d="M1465 202 L1470.0 208 L1475 202" fill="none" stroke="#ffffff" stroke-width="2.6" stroke-linecap="round" stroke-linejoin="round"/><path d="M1422 226 V256.7 H1452.1" fill="none" stroke="#e0e0e0" stroke-width="2"/><rect x="1444.1" y="227.9" width="4" height="4" fill="#d8d8d8"/><rect x="1425.9" y="247.8" width="4" height="4" fill="#d8d8d8"/><rect x="1425.9" y="233.9" width="4" height="4" fill="#0f6cc0"/><rect x="1433.8" y="239.8" width="4" height="4" fill="#0f6cc0"/><rect x="1443.9" y="246" width="4" height="4" fill="#0f6cc0"/><path d="M1465 240 L1470.0 246 L1475 240" fill="none" stroke="#ffffff" stroke-width="2.6" stroke-linecap="round" stroke-linejoin="round"/><rect x="1495.0" y="181.20000000000002" width="4.2" height="17.7" fill="#5f5f5f" stroke="#9e9e9e" stroke-width="1.8"/><rect x="1503.0" y="168.9" width="4.100000000000091" height="12.100000000000005" fill="#5f5f5f" stroke="#9e9e9e" stroke-width="1.8"/><path d="M1500 181.2 H1502.5" stroke="#e0e0e0" stroke-width="1.8"/><rect x="1508.4" y="168.9" width="8.60000000000009" height="18.100000000000005" fill="none" stroke="#e0e0e0" stroke-width="1.8"/><path d="M1517.5 187 H1520.5" stroke="#e0e0e0" stroke-width="1.8"/><rect x="1520.8000000000002" y="186.8" width="4.299999999999909" height="12.100000000000005" fill="#0063b1" stroke="#7cbdf0" stroke-width="1.8"/><path d="M1541.2 182 L1546.2 188 L1551.2 182" fill="none" stroke="#ffffff" stroke-width="2.6" stroke-linecap="round" stroke-linejoin="round"/><rect x="1495.1" y="234.9" width="9.900000000000091" height="19.799999999999983" fill="#5f5f5f" stroke="#9e9e9e" stroke-width="2"/><rect x="1506.0" y="240.8" width="9" height="13.899999999999977" fill="none" stroke="#e0e0e0" stroke-width="2"/><rect x="1516.0" y="247.0" width="9" height="7.699999999999989" fill="#0063b1" stroke="#7cbdf0" stroke-width="2"/><path d="M1499 227 L1510.8 233 L1521.1 239" fill="none" stroke="#d8d8d8" stroke-width="1.8"/><rect x="1496.1" y="224.1" width="5.8" height="5.8" fill="#d8d8d8"/><rect x="1507.8999999999999" y="230.1" width="5.8" height="5.8" fill="#d8d8d8"/><rect x="1518.1999999999998" y="236.1" width="5.8" height="5.8" fill="#d8d8d8"/><path d="M1541.2 238 L1546.2 244 L1551.2 238" fill="none" stroke="#ffffff" stroke-width="2.6" stroke-linecap="round" stroke-linejoin="round"/><circle cx="1599.9" cy="177.7" r="19" fill="none" stroke="#d8d8d8" stroke-width="2"/><path d="M1599.9 153.2 A24.5 24.5 0 1 0 1618.2 195.8" fill="none" stroke="#d8d8d8" stroke-width="2"/><path d="M1599.9 202.5 V208.5 M1582.1 208.8 H1615.9" stroke="#d8d8d8" stroke-width="2.2"/><path d="M1598.6 160.5 L1602.8 160 L1603.3 164 L1600.5 166.2 L1598.3 164.5 Z" fill="#9ddba8"/><path d="M1602.5 169 Q1606 163 1611.5 163.8 Q1616.5 167 1618.2 179 Q1614 176 1610.5 174.8 Q1605 177.5 1603.2 175.5 Z" fill="#9ddba8"/><path d="M1582.4 175 Q1584 172 1586 173.5 Q1588 170 1591.8 170 L1590.5 181 Q1588 184 1588.5 186.5 L1591.5 186.8 L1594 187.5 Q1590 188.8 1585.5 187.8 Q1582 183 1582.4 175 Z" fill="#9ddba8"/><path d="M1594.5 185 Q1600 182.5 1608.5 183 Q1609.5 189 1607 193.5 Q1606 196 1605 196.5 L1602 196 Q1599 191 1594.5 188 Z" fill="#9ddba8"/><path d="M1641 180 L1646.0 186 L1651 180" fill="none" stroke="#ffffff" stroke-width="2.6" stroke-linecap="round" stroke-linejoin="round"/><path d="M1728 185.5 V156 H1676 V208 H1699.9" fill="none" stroke="#e0e0e0" stroke-width="2"/><rect x="1681.0" y="161.2" width="9.700000000000045" height="9.600000000000023" fill="#5f5f5f" stroke="#9e9e9e" stroke-width="2"/><rect x="1697.2" y="161.2" width="25.700000000000045" height="9.600000000000023" fill="#5f5f5f" stroke="#9e9e9e" stroke-width="2"/><rect x="1681.0" y="177.2" width="9.700000000000045" height="25.5" fill="#5f5f5f" stroke="#9e9e9e" stroke-width="2"/><rect x="1703.1" y="197.3" width="9.0" height="15.399999999999977" fill="#5f5f5f" stroke="#9e9e9e" stroke-width="2"/><rect x="1713.1" y="183.2" width="10.600000000000136" height="29.5" fill="none" stroke="#e0e0e0" stroke-width="2"/><rect x="1724.7" y="189.1" width="8.399999999999864" height="23.599999999999994" fill="#0063b1" stroke="#7cbdf0" stroke-width="2"/><path d="M1804.8 157.8 V206.2 M1795.7 166.9 H1852.3 M1795.7 197.1 H1852.3" stroke="#e0e0e0" stroke-width="2"/><path d="M1806 181.8 L1813.1 190.9 L1823 174.8 L1832.9 190.9 L1844.9 172.7 L1851.9 183.4" fill="none" stroke="#3d9fe3" stroke-width="2.2"/><path d="M1867.3 180 L1872.3 186 L1877.3 180" fill="none" stroke="#ffffff" stroke-width="2.6" stroke-linecap="round" stroke-linejoin="round"/><path d="M1953.5 193 H1937.1 V163.4 H1967 V174.5" fill="none" stroke="#6e6e6e" stroke-width="2"/><rect x="1938" y="164.3" width="28" height="4.6" fill="#3c3c3c"/><path d="M1937.1 169.8 H1967" stroke="#6e6e6e" stroke-width="1.8"/><path d="M1942.9 179.7 V172.9 H1961.7" fill="none" stroke="#2e5a84" stroke-width="2"/><rect x="1943.8" y="173.8" width="5" height="5" fill="#234a6e"/><path d="M1942.9 189.6 V183.2 H1953" fill="none" stroke="#6e6e6e" stroke-width="1.8"/><rect x="1943.8" y="184.1" width="8" height="4.5" fill="#3c3c3c"/><path d="M1950.8 177.2 H1967.2 L1961 186.3 V193 H1956.3 V186.3 Z" fill="#2b2b2b" stroke="#6e6e6e" stroke-width="2" stroke-linejoin="round"/><path d="M1953.5 250.2 H1938.7 V233.9 H1965.3 V243" fill="none" stroke="#5c5c5c" stroke-width="1.5"/><rect x="1939.4" y="234.6" width="25.2" height="4.5" fill="#3c3c3c"/><path d="M1938.7 239.6 H1965.3" stroke="#5c5c5c" stroke-width="1.5"/><rect x="1941" y="241.7" width="5.9" height="4.9" fill="#3c3c3c" stroke="#5c5c5c" stroke-width="1.2"/><rect x="1949.3" y="241.7" width="5" height="4.9" fill="#3c3c3c" stroke="#5c5c5c" stroke-width="1.2"/><path d="M1954 243.6 H1967.6 L1962.3 250.3 V257.3 H1958.8 V250.3 Z" fill="#2b2b2b" stroke="#5c5c5c" stroke-width="1.5" stroke-linejoin="round"/><path d="M2300 186 A11.25 11.25 0 0 1 2300 163.5 H2316.3 A11.25 11.25 0 0 1 2316.3 186 H2307.4" fill="none" stroke="#d8d8d8" stroke-width="2.1"/><path d="M2322.8 177 H2314 A11.9 11.9 0 0 0 2314 200.8 H2330.2 A11.9 11.9 0 0 0 2331 177" fill="none" stroke="#d8d8d8" stroke-width="2.1"/><path d="M2474 156.9 H2513.8 V193 H2478.7 L2465.3 206.4 V193 H2460.1 V169.3" fill="none" stroke="#e0e0e0" stroke-width="2.1"/><path d="M2469.9 150.2 V180.6 M2455 165.1 H2485.4" stroke="#6ee08a" stroke-width="2.2"/><path d="M2604.5 187.6 L2644.2 157 L2637 207.5 M2618.9 179.4 L2636.2 188.6" fill="none" stroke="#3d9fe3" stroke-width="4.2" stroke-linejoin="miter"/><path d="M2667 179.8 L2672.0 185.8 L2677 179.8" fill="none" stroke="#ffffff" stroke-width="2.4" stroke-linecap="round" stroke-linejoin="round"/><path d="M2738.5 204 H2752.5 Q2740.3 195 2740.3 182.5 A20.5 21.3 0 0 1 2781.3 182.5 Q2781.3 195 2769 204 H2783.5" fill="none" stroke="#d8d8d8" stroke-width="3"/><path d="M2804.9 179.8 L2809.9 185.8 L2814.9 179.8" fill="none" stroke="#ffffff" stroke-width="2.4" stroke-linecap="round" stroke-linejoin="round"/><path d="M2704 105 V119.3 H2721.2 V116" fill="none" stroke="#e6e6e6" stroke-width="1.8"/><path d="M2707.5 114 Q2710 104 2721 103.5 V99 L2727 105.5 L2721 111.5 V107.2 Q2712 107.5 2707.5 114 Z" fill="none" stroke="#e6e6e6" stroke-width="1.6" stroke-linejoin="round"/><ellipse cx="287" cy="199.7" rx="53.8" ry="65.8" fill="none" stroke="#fb2a08" stroke-width="5"/></svg>
</body></html>
